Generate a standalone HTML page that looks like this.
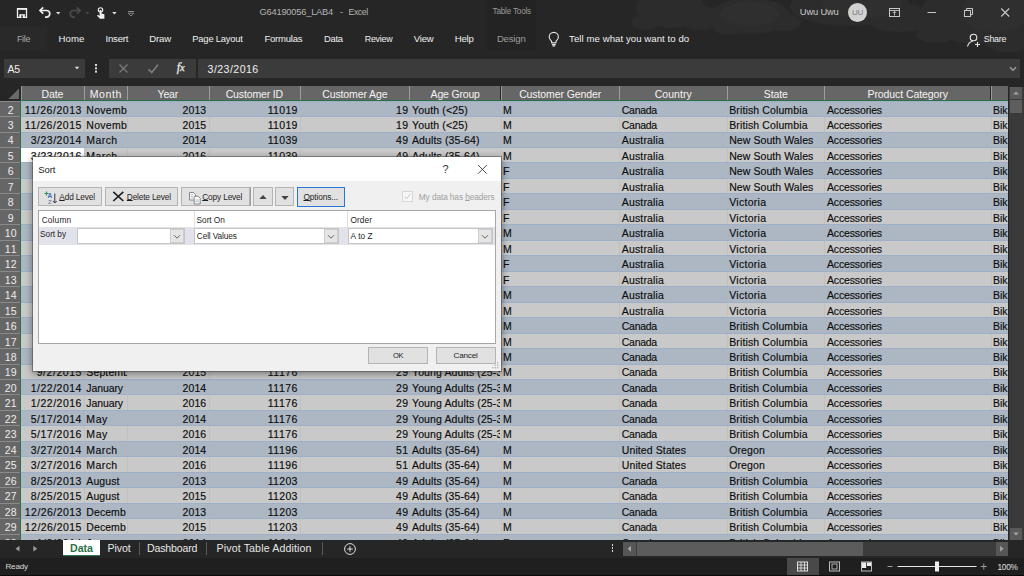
<!DOCTYPE html><html><head><meta charset="utf-8"><title>G64190056_LAB4 - Excel</title><style>
*{box-sizing:border-box;margin:0;padding:0}
html,body{width:1024px;height:576px;overflow:hidden;background:#262626}
body{position:relative;font-family:"Liberation Sans",sans-serif;font-size:9.5px;color:#fff}
.a{position:absolute;white-space:nowrap}
.ch{position:absolute;top:86px;height:15px;background:#666;border-left:1px solid #9c9c9c}
.rh{position:absolute;left:0;width:20.5px;background:#666;border-top:1px solid #8a8a8a}
.row{position:absolute;left:21px;width:987px;overflow:hidden;border-top:1px solid #9db0c8}
.c{position:absolute;top:0;height:100%;overflow:hidden}
.v{border-left:1px solid #c0c0c0}
.dlg{position:absolute;left:32.5px;top:157px;width:468px;height:213.5px;background:#f0f0f0;color:#222;box-shadow:0 0 0 1px rgba(70,70,70,.5),0 2px 7px 1px rgba(0,0,0,.4)}
.btn{position:absolute;background:#e1e1e1;border:1px solid #b4b4b4}
.cb{position:absolute;top:71px;height:16.5px;background:#fff;border:1px solid #c6c6c6}
.cb i{position:absolute;right:0;top:0;bottom:0;width:14px;background:#e5e5e5;border:1px solid #cdcdcd}
u{text-decoration:underline;text-underline-offset:.4px;text-decoration-thickness:.8px}
</style></head><body>
<div class="a" style="left:0;top:0;width:1024px;height:86px;background:#262626"></div>
<svg class="a" style="left:600px;top:0" width="424" height="58" viewBox="0 0 424 58">
<g fill="#2c2c2c">
<ellipse cx="70" cy="8" rx="34" ry="20"/><ellipse cx="46" cy="22" rx="14" ry="8"/><ellipse cx="100" cy="18" rx="22" ry="12"/>
<ellipse cx="150" cy="16" rx="40" ry="18"/><ellipse cx="128" cy="28" rx="14" ry="7"/><ellipse cx="185" cy="22" rx="16" ry="9"/>
<ellipse cx="250" cy="6" rx="60" ry="20"/><ellipse cx="300" cy="18" rx="34" ry="14"/>
<ellipse cx="380" cy="14" rx="60" ry="30"/><ellipse cx="408" cy="38" rx="26" ry="14"/><ellipse cx="336" cy="34" rx="20" ry="9"/>
</g>
<g fill="#2f2f2f"><ellipse cx="150" cy="14" rx="30" ry="12"/><ellipse cx="262" cy="4" rx="40" ry="14"/><ellipse cx="395" cy="12" rx="34" ry="20"/></g>
</svg>
<div class="a" style="left:0;top:27px;width:47px;height:24px;background:#292929"></div>
<div class="a" style="left:487px;top:0;width:49px;height:51px;background:#232323"></div>
<div class="a" style="left:492.50px;top:5.10px;line-height:14px;font-size:8.2px;color:#9a9a9a;letter-spacing:-0.213px;">Table Tools</div>
<div class="a" style="left:259.50px;top:5.10px;line-height:14px;font-size:9.3px;color:#b4b4b4;letter-spacing:-0.211px;">G64190056_LAB4</div>
<div class="a" style="left:340.00px;top:5.10px;line-height:14px;font-size:9.6px;color:#b4b4b4;letter-spacing:0.000px;">-</div>
<div class="a" style="left:348.60px;top:5.10px;line-height:14px;font-size:8.6px;color:#b4b4b4;letter-spacing:-0.383px;">Excel</div>
<div class="a" style="left:799.80px;top:5.10px;line-height:14px;font-size:9.4px;color:#c8c8c8;letter-spacing:-0.187px;">Uwu Uwu</div>
<div class="a" style="left:847.9px;top:2.8px;width:19.2px;height:19.2px;border-radius:50%;background:#d2d2d2;color:#7a7a7a;font-size:8px;line-height:19.4px;text-align:center;letter-spacing:-.2px">UU</div>
<div class="a" style="left:16.90px;top:31.90px;line-height:14px;font-size:8.9px;color:#a8a8a8;letter-spacing:-0.214px;">File</div>
<div class="a" style="left:58.60px;top:31.90px;line-height:14px;font-size:9.6px;color:#f0f0f0;letter-spacing:0.064px;">Home</div>
<div class="a" style="left:105.50px;top:31.90px;line-height:14px;font-size:9.6px;color:#f0f0f0;letter-spacing:-0.222px;">Insert</div>
<div class="a" style="left:149.20px;top:31.90px;line-height:14px;font-size:9.6px;color:#f0f0f0;letter-spacing:-0.101px;">Draw</div>
<div class="a" style="left:192.30px;top:31.90px;line-height:14px;font-size:9.4px;color:#f0f0f0;letter-spacing:-0.199px;">Page Layout</div>
<div class="a" style="left:264.40px;top:31.90px;line-height:14px;font-size:9.5px;color:#f0f0f0;letter-spacing:-0.213px;">Formulas</div>
<div class="a" style="left:323.90px;top:31.90px;line-height:14px;font-size:9.4px;color:#f0f0f0;letter-spacing:-0.219px;">Data</div>
<div class="a" style="left:364.70px;top:31.90px;line-height:14px;font-size:8.9px;color:#f0f0f0;letter-spacing:-0.216px;">Review</div>
<div class="a" style="left:413.75px;top:31.90px;line-height:14px;font-size:9.5px;color:#f0f0f0;letter-spacing:-0.190px;">View</div>
<div class="a" style="left:454.70px;top:31.90px;line-height:14px;font-size:9.6px;color:#f0f0f0;letter-spacing:-0.182px;">Help</div>
<div class="a" style="left:496.90px;top:31.90px;line-height:14px;font-size:9.6px;color:#9c9c9c;letter-spacing:-0.197px;">Design</div>
<div class="a" style="left:569.10px;top:31.90px;line-height:14px;font-size:9.6px;color:#f0f0f0;letter-spacing:0.063px;">Tell me what you want to do</div>
<div class="a" style="left:983.70px;top:31.90px;line-height:14px;font-size:8.9px;color:#f0f0f0;letter-spacing:-0.213px;">Share</div>
<svg class="a" style="left:0;top:0" width="160" height="26" viewBox="0 0 160 26" fill="none" stroke="#f0f0f0" stroke-width="1.2">
<path d="M17.500 8.700h9v8.700h-9z" stroke-width="1.300"/><path d="M17.500 9h9" stroke-width="1.600"/><rect x="19.300" y="14.200" width="5.600" height="3.300" fill="#f0f0f0" stroke="none"/><rect x="21.300" y="15.400" width="1.500" height="2.200" fill="#262626" stroke="none"/>
<path d="M40 10.500h6.500a3.300 3.300 0 0 1 0 6.600h-1.500" stroke-width="1.700"/><path d="M43.200 7.300l-3.200 3.200 3.200 3.200" stroke-width="1.700"/>
<path d="M56 12l2.200 2.400 2.200-2.400z" fill="#e0e0e0" stroke="none"/>
<g stroke="#4c4c4c"><path d="M80 10.500h-6.500a3.300 3.300 0 0 0 0 6.600h1.500" stroke-width="1.700"/><path d="M76.800 7.300l3.200 3.200-3.200 3.200" stroke-width="1.700"/></g>
<path d="M85.500 12l2 2.200 2-2.200z" fill="#4a4a4a" stroke="none"/>
<circle cx="100.500" cy="10" r="2.200" stroke-width="1.100"/><path d="M99.600 10v6l-1.600-1.200-1 1 3 3h4.400v-4.600l-3-.8v-3.400z" fill="#f0f0f0" stroke="none"/>
<path d="M112.200 12l2.200 2.400 2.200-2.400z" fill="#e0e0e0" stroke="none"/>
<path d="M128 11.500h6" stroke="#8a8a8a" stroke-width="1"/><path d="M128.200 13.200l2.800 2.800 2.800-2.800z" stroke="#8a8a8a" stroke-width=".9"/>
</svg>
<svg class="a" style="left:546px;top:30px" width="16" height="18" viewBox="0 0 16 18" fill="none" stroke="#e8e8e8" stroke-width="1.100">
<path d="M5.600 11.200c-1.600-1.200-2.400-2.600-2.400-4.200a4.600 4.600 0 0 1 9.200 0c0 1.600-.8 3-2.400 4.200v1.600h-4.400z"/><path d="M5.800 14.400h4M6.400 15.900h2.800"/></svg>
<svg class="a" style="left:964px;top:31px" width="18" height="18" viewBox="0 0 18 18" fill="none" stroke="#e8e8e8" stroke-width="1.100">
<circle cx="9.500" cy="6.500" r="3.300"/><path d="M3.500 15.500c.7-3 2.600-4.800 5.200-5.300"/><path d="M11 13.500h5M13.500 11v5"/></svg>
<svg class="a" style="left:880px;top:0" width="144" height="26" viewBox="0 0 144 26" fill="none" stroke="#c8c8c8" stroke-width="1">
<rect x="9.500" y="8.500" width="10" height="8"/><path d="M9.500 10.500h10M14.500 15.500v-4M12.800 13l1.700-1.700 1.700 1.700" stroke-width=".9"/>
<path d="M47.500 12.500h8.500"/>
<rect x="84.500" y="10.500" width="6" height="6"/><path d="M86.500 10.500v-2h6v6h-2"/>
<path d="M121.200 8.500l8 8M129.200 8.500l-8 8" stroke-width="1.100"/>
</svg>
<div class="a" style="left:4px;top:59px;width:81px;height:19px;background:#3b3b3b"></div>
<div class="a" style="left:7.50px;top:61.90px;line-height:14px;font-size:10.5px;color:#f0f0f0;letter-spacing:-0.144px;">A5</div>
<svg class="a" style="left:72px;top:64px" width="10" height="8" viewBox="0 0 10 8"><path d="M2.700 2.800l2.300 2.500 2.300-2.500z" fill="#e0e0e0"/></svg>
<div class="a" style="left:95px;top:63.500px;width:2px;height:2px;background:#ddd;box-shadow:0 3.300px 0 #ddd,0 6.600px 0 #ddd"></div>
<div class="a" style="left:109px;top:59px;width:87px;height:19px;background:#3b3b3b"></div>
<svg class="a" style="left:109px;top:59px" width="87" height="19" viewBox="0 0 87 19" fill="none" stroke="#7a7a7a" stroke-width="1.200">
<path d="M10.500 5.500l8 8M18.500 5.500l-8 8"/><path d="M39.500 10.300l3.200 3.200 6.300-7.700" stroke-width="1.800"/></svg>
<div class="a" style="left:176.700px;top:60.300px;font-family:'Liberation Serif',serif;font-style:italic;font-size:12.500px;line-height:14px;color:#f0f0f0;letter-spacing:-.3px;-webkit-text-stroke:.25px #f0f0f0">f<span style="font-size:10.500px">x</span></div>
<div class="a" style="left:198px;top:59px;width:822px;height:19px;background:#3b3b3b"></div>
<div class="a" style="left:207.60px;top:61.90px;line-height:14px;font-size:10.6px;color:#f0f0f0;letter-spacing:0.430px;">3/23/2016</div>
<svg class="a" style="left:1007px;top:64px" width="12" height="10" viewBox="0 0 12 10"><path d="M3 3.200l3 3 3-3" fill="none" stroke="#9a9a9a" stroke-width="1.500"/></svg>
<div class="a" style="left:0;top:86px;width:20.500px;height:15px;background:#262626"></div>
<svg class="a" style="left:8px;top:88px" width="12" height="12" viewBox="0 0 12 12"><path d="M11 0.500v10.500h-10.500z" fill="#6a6a6a"/></svg>
<div class="ch" style="left:20.5px;width:63.25px"></div>
<div class="a" style="left:41.46px;top:87.40px;line-height:14px;font-size:10.5px;color:#f4f4f4;letter-spacing:-0.083px;">Date</div>
<div class="ch" style="left:83.75px;width:43.00px"></div>
<div class="a" style="left:89.80px;top:87.40px;line-height:14px;font-size:10.5px;color:#f4f4f4;letter-spacing:0.577px;">Month</div>
<div class="ch" style="left:126.75px;width:81.75px"></div>
<div class="a" style="left:157.61px;top:87.40px;line-height:14px;font-size:10.5px;color:#f4f4f4;letter-spacing:-0.194px;">Year</div>
<div class="ch" style="left:208.5px;width:91.25px"></div>
<div class="a" style="left:225.69px;top:87.40px;line-height:14px;font-size:10.5px;color:#f4f4f4;letter-spacing:-0.146px;">Customer ID</div>
<div class="ch" style="left:299.75px;width:109.65px"></div>
<div class="a" style="left:322.26px;top:87.40px;line-height:14px;font-size:10.5px;color:#f4f4f4;letter-spacing:-0.119px;">Customer Age</div>
<div class="ch" style="left:409.4px;width:91.10px"></div>
<div class="a" style="left:430.60px;top:87.40px;line-height:14px;font-size:10.5px;color:#f4f4f4;letter-spacing:-0.187px;">Age Group</div>
<div class="ch" style="left:500.5px;width:118.70px"></div>
<div class="a" style="left:519.13px;top:87.40px;line-height:14px;font-size:10.5px;color:#f4f4f4;letter-spacing:-0.101px;">Customer Gender</div>
<div class="ch" style="left:619.2px;width:107.40px"></div>
<div class="a" style="left:654.72px;top:87.40px;line-height:14px;font-size:10.5px;color:#f4f4f4;letter-spacing:0.031px;">Country</div>
<div class="ch" style="left:726.6px;width:97.80px"></div>
<div class="a" style="left:763.82px;top:87.40px;line-height:14px;font-size:10.5px;color:#f4f4f4;letter-spacing:-0.137px;">State</div>
<div class="ch" style="left:824.4px;width:166.10px"></div>
<div class="a" style="left:867.51px;top:87.40px;line-height:14px;font-size:10.5px;color:#f4f4f4;letter-spacing:-0.082px;">Product Category</div>
<div class="ch" style="left:990.5px;width:17.00px"></div>
<div class="a" style="left:20.500px;top:100.6px;width:987px;height:439.40px;background:#c9c9c9"></div>
<div class="rh" style="top:101px;height:15px"></div>
<div class="a" style="left:7.63px;top:102.55px;line-height:14px;font-size:10.5px;color:#ececec;letter-spacing:0.000px;">2</div>
<div class="row" style="top:101px;height:15px;background:#acb7c3">
<div class="c" style="left:-0.50px;width:63.25px;"><span class="a" style="left:4.30px;top:0.55px;line-height:14px;font-size:10.5px;color:#0c0c0c;-webkit-text-stroke:.15px #0c0c0c;letter-spacing:0.542px">11/26/2013</span></div>
<div class="c" style="left:62.75px;width:43.00px;"><span class="a" style="left:2.6px;top:0.55px;line-height:14px;font-size:10.5px;color:#0c0c0c;-webkit-text-stroke:.15px #0c0c0c;letter-spacing:0.269px">Novemb</span></div>
<div class="c" style="left:105.75px;width:81.75px;"><span class="a" style="left:55.66px;top:0.55px;line-height:14px;font-size:10.5px;color:#0c0c0c;-webkit-text-stroke:.15px #0c0c0c;letter-spacing:0.145px">2013</span></div>
<div class="c" style="left:187.50px;width:91.25px;"><span class="a" style="left:59.21px;top:0.55px;line-height:14px;font-size:10.5px;color:#0c0c0c;-webkit-text-stroke:.15px #0c0c0c;letter-spacing:0.331px">11019</span></div>
<div class="c" style="left:278.75px;width:109.65px;"><span class="a" style="left:96.35px;top:0.55px;line-height:14px;font-size:10.5px;color:#0c0c0c;-webkit-text-stroke:.15px #0c0c0c;letter-spacing:0.218px">19</span></div>
<div class="c" style="left:388.40px;width:91.10px;"><span class="a" style="left:2.6px;top:0.55px;line-height:14px;font-size:10.5px;color:#0c0c0c;-webkit-text-stroke:.15px #0c0c0c;letter-spacing:0.145px">Youth (&lt;25)</span></div>
<div class="c" style="left:479.50px;width:118.70px;"><span class="a" style="left:2.6px;top:0.55px;line-height:14px;font-size:10.5px;color:#0c0c0c;-webkit-text-stroke:.15px #0c0c0c;letter-spacing:0.000px">M</span></div>
<div class="c" style="left:598.20px;width:107.40px;"><span class="a" style="left:2.6px;top:0.55px;line-height:14px;font-size:10.5px;color:#0c0c0c;-webkit-text-stroke:.15px #0c0c0c;letter-spacing:-0.270px">Canada</span></div>
<div class="c" style="left:705.60px;width:97.80px;"><span class="a" style="left:2.6px;top:0.55px;line-height:14px;font-size:10.5px;color:#0c0c0c;-webkit-text-stroke:.15px #0c0c0c;letter-spacing:0.124px">British Columbia</span></div>
<div class="c" style="left:803.40px;width:166.10px;"><span class="a" style="left:2.6px;top:0.55px;line-height:14px;font-size:10.5px;color:#0c0c0c;-webkit-text-stroke:.15px #0c0c0c;letter-spacing:-0.147px">Accessories</span></div>
<div class="c" style="left:969.50px;width:17.00px;"><span class="a" style="left:2.6px;top:0.55px;line-height:14px;font-size:10.5px;color:#0c0c0c;-webkit-text-stroke:.15px #0c0c0c;letter-spacing:-0.089px">Bik</span></div>
</div>
<div class="rh" style="top:116px;height:16px"></div>
<div class="a" style="left:7.63px;top:118.02px;line-height:14px;font-size:10.5px;color:#ececec;letter-spacing:0.000px;">3</div>
<div class="row" style="top:116px;height:16px;background:#c9c9c9">
<div class="c" style="left:-0.50px;width:63.25px;"><span class="a" style="left:4.30px;top:1.02px;line-height:14px;font-size:10.5px;color:#0c0c0c;-webkit-text-stroke:.15px #0c0c0c;letter-spacing:0.542px">11/26/2015</span></div>
<div class="c v" style="left:62.75px;width:43.00px;"><span class="a" style="left:1.6px;top:1.02px;line-height:14px;font-size:10.5px;color:#0c0c0c;-webkit-text-stroke:.15px #0c0c0c;letter-spacing:0.269px">Novemb</span></div>
<div class="c v" style="left:105.75px;width:81.75px;"><span class="a" style="left:54.66px;top:1.02px;line-height:14px;font-size:10.5px;color:#0c0c0c;-webkit-text-stroke:.15px #0c0c0c;letter-spacing:0.145px">2015</span></div>
<div class="c v" style="left:187.50px;width:91.25px;"><span class="a" style="left:58.21px;top:1.02px;line-height:14px;font-size:10.5px;color:#0c0c0c;-webkit-text-stroke:.15px #0c0c0c;letter-spacing:0.331px">11019</span></div>
<div class="c v" style="left:278.75px;width:109.65px;"><span class="a" style="left:95.35px;top:1.02px;line-height:14px;font-size:10.5px;color:#0c0c0c;-webkit-text-stroke:.15px #0c0c0c;letter-spacing:0.218px">19</span></div>
<div class="c v" style="left:388.40px;width:91.10px;"><span class="a" style="left:1.6px;top:1.02px;line-height:14px;font-size:10.5px;color:#0c0c0c;-webkit-text-stroke:.15px #0c0c0c;letter-spacing:0.145px">Youth (&lt;25)</span></div>
<div class="c v" style="left:479.50px;width:118.70px;"><span class="a" style="left:1.6px;top:1.02px;line-height:14px;font-size:10.5px;color:#0c0c0c;-webkit-text-stroke:.15px #0c0c0c;letter-spacing:0.000px">M</span></div>
<div class="c v" style="left:598.20px;width:107.40px;"><span class="a" style="left:1.6px;top:1.02px;line-height:14px;font-size:10.5px;color:#0c0c0c;-webkit-text-stroke:.15px #0c0c0c;letter-spacing:-0.270px">Canada</span></div>
<div class="c v" style="left:705.60px;width:97.80px;"><span class="a" style="left:1.6px;top:1.02px;line-height:14px;font-size:10.5px;color:#0c0c0c;-webkit-text-stroke:.15px #0c0c0c;letter-spacing:0.124px">British Columbia</span></div>
<div class="c v" style="left:803.40px;width:166.10px;"><span class="a" style="left:1.6px;top:1.02px;line-height:14px;font-size:10.5px;color:#0c0c0c;-webkit-text-stroke:.15px #0c0c0c;letter-spacing:-0.147px">Accessories</span></div>
<div class="c v" style="left:969.50px;width:17.00px;"><span class="a" style="left:1.6px;top:1.02px;line-height:14px;font-size:10.5px;color:#0c0c0c;-webkit-text-stroke:.15px #0c0c0c;letter-spacing:-0.089px">Bik</span></div>
</div>
<div class="rh" style="top:132px;height:15px"></div>
<div class="a" style="left:7.63px;top:133.48px;line-height:14px;font-size:10.5px;color:#ececec;letter-spacing:0.000px;">4</div>
<div class="row" style="top:132px;height:15px;background:#acb7c3">
<div class="c" style="left:-0.50px;width:63.25px;"><span class="a" style="left:10.25px;top:0.48px;line-height:14px;font-size:10.5px;color:#0c0c0c;-webkit-text-stroke:.15px #0c0c0c;letter-spacing:0.498px">3/23/2014</span></div>
<div class="c" style="left:62.75px;width:43.00px;"><span class="a" style="left:2.6px;top:0.48px;line-height:14px;font-size:10.5px;color:#0c0c0c;-webkit-text-stroke:.15px #0c0c0c;letter-spacing:0.424px">March</span></div>
<div class="c" style="left:105.75px;width:81.75px;"><span class="a" style="left:55.66px;top:0.48px;line-height:14px;font-size:10.5px;color:#0c0c0c;-webkit-text-stroke:.15px #0c0c0c;letter-spacing:0.145px">2014</span></div>
<div class="c" style="left:187.50px;width:91.25px;"><span class="a" style="left:59.21px;top:0.48px;line-height:14px;font-size:10.5px;color:#0c0c0c;-webkit-text-stroke:.15px #0c0c0c;letter-spacing:0.331px">11039</span></div>
<div class="c" style="left:278.75px;width:109.65px;"><span class="a" style="left:96.35px;top:0.48px;line-height:14px;font-size:10.5px;color:#0c0c0c;-webkit-text-stroke:.15px #0c0c0c;letter-spacing:0.218px">49</span></div>
<div class="c" style="left:388.40px;width:91.10px;"><span class="a" style="left:2.6px;top:0.48px;line-height:14px;font-size:10.5px;color:#0c0c0c;-webkit-text-stroke:.15px #0c0c0c;letter-spacing:0.116px">Adults (35-64)</span></div>
<div class="c" style="left:479.50px;width:118.70px;"><span class="a" style="left:2.6px;top:0.48px;line-height:14px;font-size:10.5px;color:#0c0c0c;-webkit-text-stroke:.15px #0c0c0c;letter-spacing:0.000px">M</span></div>
<div class="c" style="left:598.20px;width:107.40px;"><span class="a" style="left:2.6px;top:0.48px;line-height:14px;font-size:10.5px;color:#0c0c0c;-webkit-text-stroke:.15px #0c0c0c;letter-spacing:0.166px">Australia</span></div>
<div class="c" style="left:705.60px;width:97.80px;"><span class="a" style="left:2.6px;top:0.48px;line-height:14px;font-size:10.5px;color:#0c0c0c;-webkit-text-stroke:.15px #0c0c0c;letter-spacing:0.075px">New South Wales</span></div>
<div class="c" style="left:803.40px;width:166.10px;"><span class="a" style="left:2.6px;top:0.48px;line-height:14px;font-size:10.5px;color:#0c0c0c;-webkit-text-stroke:.15px #0c0c0c;letter-spacing:-0.147px">Accessories</span></div>
<div class="c" style="left:969.50px;width:17.00px;"><span class="a" style="left:2.6px;top:0.48px;line-height:14px;font-size:10.5px;color:#0c0c0c;-webkit-text-stroke:.15px #0c0c0c;letter-spacing:-0.089px">Bik</span></div>
</div>
<div class="rh" style="top:147px;height:15px"></div>
<div class="a" style="left:7.63px;top:148.95px;line-height:14px;font-size:10.5px;color:#ececec;letter-spacing:0.000px;">5</div>
<div class="row" style="top:147px;height:15px;background:#c9c9c9">
<div class="c" style="left:-0.50px;width:63.25px;background:#fff;"><span class="a" style="left:10.25px;top:0.95px;line-height:14px;font-size:10.5px;color:#0c0c0c;-webkit-text-stroke:.15px #0c0c0c;letter-spacing:0.498px">3/23/2016</span></div>
<div class="c v" style="left:62.75px;width:43.00px;"><span class="a" style="left:1.6px;top:0.95px;line-height:14px;font-size:10.5px;color:#0c0c0c;-webkit-text-stroke:.15px #0c0c0c;letter-spacing:0.424px">March</span></div>
<div class="c v" style="left:105.75px;width:81.75px;"><span class="a" style="left:54.66px;top:0.95px;line-height:14px;font-size:10.5px;color:#0c0c0c;-webkit-text-stroke:.15px #0c0c0c;letter-spacing:0.145px">2016</span></div>
<div class="c v" style="left:187.50px;width:91.25px;"><span class="a" style="left:58.21px;top:0.95px;line-height:14px;font-size:10.5px;color:#0c0c0c;-webkit-text-stroke:.15px #0c0c0c;letter-spacing:0.331px">11039</span></div>
<div class="c v" style="left:278.75px;width:109.65px;"><span class="a" style="left:95.35px;top:0.95px;line-height:14px;font-size:10.5px;color:#0c0c0c;-webkit-text-stroke:.15px #0c0c0c;letter-spacing:0.218px">49</span></div>
<div class="c v" style="left:388.40px;width:91.10px;"><span class="a" style="left:1.6px;top:0.95px;line-height:14px;font-size:10.5px;color:#0c0c0c;-webkit-text-stroke:.15px #0c0c0c;letter-spacing:0.116px">Adults (35-64)</span></div>
<div class="c v" style="left:479.50px;width:118.70px;"><span class="a" style="left:1.6px;top:0.95px;line-height:14px;font-size:10.5px;color:#0c0c0c;-webkit-text-stroke:.15px #0c0c0c;letter-spacing:0.000px">M</span></div>
<div class="c v" style="left:598.20px;width:107.40px;"><span class="a" style="left:1.6px;top:0.95px;line-height:14px;font-size:10.5px;color:#0c0c0c;-webkit-text-stroke:.15px #0c0c0c;letter-spacing:0.166px">Australia</span></div>
<div class="c v" style="left:705.60px;width:97.80px;"><span class="a" style="left:1.6px;top:0.95px;line-height:14px;font-size:10.5px;color:#0c0c0c;-webkit-text-stroke:.15px #0c0c0c;letter-spacing:0.075px">New South Wales</span></div>
<div class="c v" style="left:803.40px;width:166.10px;"><span class="a" style="left:1.6px;top:0.95px;line-height:14px;font-size:10.5px;color:#0c0c0c;-webkit-text-stroke:.15px #0c0c0c;letter-spacing:-0.147px">Accessories</span></div>
<div class="c v" style="left:969.50px;width:17.00px;"><span class="a" style="left:1.6px;top:0.95px;line-height:14px;font-size:10.5px;color:#0c0c0c;-webkit-text-stroke:.15px #0c0c0c;letter-spacing:-0.089px">Bik</span></div>
</div>
<div class="rh" style="top:162px;height:16px"></div>
<div class="a" style="left:7.63px;top:164.42px;line-height:14px;font-size:10.5px;color:#ececec;letter-spacing:0.000px;">6</div>
<div class="row" style="top:162px;height:16px;background:#acb7c3">
<div class="c" style="left:-0.50px;width:63.25px;"></div>
<div class="c" style="left:62.75px;width:43.00px;"></div>
<div class="c" style="left:105.75px;width:81.75px;"></div>
<div class="c" style="left:187.50px;width:91.25px;"></div>
<div class="c" style="left:278.75px;width:109.65px;"></div>
<div class="c" style="left:388.40px;width:91.10px;"></div>
<div class="c" style="left:479.50px;width:118.70px;"><span class="a" style="left:2.6px;top:1.42px;line-height:14px;font-size:10.5px;color:#0c0c0c;-webkit-text-stroke:.15px #0c0c0c;letter-spacing:0.000px">F</span></div>
<div class="c" style="left:598.20px;width:107.40px;"><span class="a" style="left:2.6px;top:1.42px;line-height:14px;font-size:10.5px;color:#0c0c0c;-webkit-text-stroke:.15px #0c0c0c;letter-spacing:0.166px">Australia</span></div>
<div class="c" style="left:705.60px;width:97.80px;"><span class="a" style="left:2.6px;top:1.42px;line-height:14px;font-size:10.5px;color:#0c0c0c;-webkit-text-stroke:.15px #0c0c0c;letter-spacing:0.075px">New South Wales</span></div>
<div class="c" style="left:803.40px;width:166.10px;"><span class="a" style="left:2.6px;top:1.42px;line-height:14px;font-size:10.5px;color:#0c0c0c;-webkit-text-stroke:.15px #0c0c0c;letter-spacing:-0.147px">Accessories</span></div>
<div class="c" style="left:969.50px;width:17.00px;"><span class="a" style="left:2.6px;top:1.42px;line-height:14px;font-size:10.5px;color:#0c0c0c;-webkit-text-stroke:.15px #0c0c0c;letter-spacing:-0.089px">Bik</span></div>
</div>
<div class="rh" style="top:178px;height:15px"></div>
<div class="a" style="left:7.63px;top:179.88px;line-height:14px;font-size:10.5px;color:#ececec;letter-spacing:0.000px;">7</div>
<div class="row" style="top:178px;height:15px;background:#c9c9c9">
<div class="c" style="left:-0.50px;width:63.25px;"></div>
<div class="c v" style="left:62.75px;width:43.00px;"></div>
<div class="c v" style="left:105.75px;width:81.75px;"></div>
<div class="c v" style="left:187.50px;width:91.25px;"></div>
<div class="c v" style="left:278.75px;width:109.65px;"></div>
<div class="c v" style="left:388.40px;width:91.10px;"></div>
<div class="c v" style="left:479.50px;width:118.70px;"><span class="a" style="left:1.6px;top:0.88px;line-height:14px;font-size:10.5px;color:#0c0c0c;-webkit-text-stroke:.15px #0c0c0c;letter-spacing:0.000px">F</span></div>
<div class="c v" style="left:598.20px;width:107.40px;"><span class="a" style="left:1.6px;top:0.88px;line-height:14px;font-size:10.5px;color:#0c0c0c;-webkit-text-stroke:.15px #0c0c0c;letter-spacing:0.166px">Australia</span></div>
<div class="c v" style="left:705.60px;width:97.80px;"><span class="a" style="left:1.6px;top:0.88px;line-height:14px;font-size:10.5px;color:#0c0c0c;-webkit-text-stroke:.15px #0c0c0c;letter-spacing:0.075px">New South Wales</span></div>
<div class="c v" style="left:803.40px;width:166.10px;"><span class="a" style="left:1.6px;top:0.88px;line-height:14px;font-size:10.5px;color:#0c0c0c;-webkit-text-stroke:.15px #0c0c0c;letter-spacing:-0.147px">Accessories</span></div>
<div class="c v" style="left:969.50px;width:17.00px;"><span class="a" style="left:1.6px;top:0.88px;line-height:14px;font-size:10.5px;color:#0c0c0c;-webkit-text-stroke:.15px #0c0c0c;letter-spacing:-0.089px">Bik</span></div>
</div>
<div class="rh" style="top:193px;height:16px"></div>
<div class="a" style="left:7.63px;top:195.35px;line-height:14px;font-size:10.5px;color:#ececec;letter-spacing:0.000px;">8</div>
<div class="row" style="top:193px;height:16px;background:#acb7c3">
<div class="c" style="left:-0.50px;width:63.25px;"></div>
<div class="c" style="left:62.75px;width:43.00px;"></div>
<div class="c" style="left:105.75px;width:81.75px;"></div>
<div class="c" style="left:187.50px;width:91.25px;"></div>
<div class="c" style="left:278.75px;width:109.65px;"></div>
<div class="c" style="left:388.40px;width:91.10px;"></div>
<div class="c" style="left:479.50px;width:118.70px;"><span class="a" style="left:2.6px;top:1.35px;line-height:14px;font-size:10.5px;color:#0c0c0c;-webkit-text-stroke:.15px #0c0c0c;letter-spacing:0.000px">F</span></div>
<div class="c" style="left:598.20px;width:107.40px;"><span class="a" style="left:2.6px;top:1.35px;line-height:14px;font-size:10.5px;color:#0c0c0c;-webkit-text-stroke:.15px #0c0c0c;letter-spacing:0.166px">Australia</span></div>
<div class="c" style="left:705.60px;width:97.80px;"><span class="a" style="left:2.6px;top:1.35px;line-height:14px;font-size:10.5px;color:#0c0c0c;-webkit-text-stroke:.15px #0c0c0c;letter-spacing:0.285px">Victoria</span></div>
<div class="c" style="left:803.40px;width:166.10px;"><span class="a" style="left:2.6px;top:1.35px;line-height:14px;font-size:10.5px;color:#0c0c0c;-webkit-text-stroke:.15px #0c0c0c;letter-spacing:-0.147px">Accessories</span></div>
<div class="c" style="left:969.50px;width:17.00px;"><span class="a" style="left:2.6px;top:1.35px;line-height:14px;font-size:10.5px;color:#0c0c0c;-webkit-text-stroke:.15px #0c0c0c;letter-spacing:-0.089px">Bik</span></div>
</div>
<div class="rh" style="top:209px;height:15px"></div>
<div class="a" style="left:7.63px;top:210.82px;line-height:14px;font-size:10.5px;color:#ececec;letter-spacing:0.000px;">9</div>
<div class="row" style="top:209px;height:15px;background:#c9c9c9">
<div class="c" style="left:-0.50px;width:63.25px;"></div>
<div class="c v" style="left:62.75px;width:43.00px;"></div>
<div class="c v" style="left:105.75px;width:81.75px;"></div>
<div class="c v" style="left:187.50px;width:91.25px;"></div>
<div class="c v" style="left:278.75px;width:109.65px;"></div>
<div class="c v" style="left:388.40px;width:91.10px;"></div>
<div class="c v" style="left:479.50px;width:118.70px;"><span class="a" style="left:1.6px;top:0.82px;line-height:14px;font-size:10.5px;color:#0c0c0c;-webkit-text-stroke:.15px #0c0c0c;letter-spacing:0.000px">F</span></div>
<div class="c v" style="left:598.20px;width:107.40px;"><span class="a" style="left:1.6px;top:0.82px;line-height:14px;font-size:10.5px;color:#0c0c0c;-webkit-text-stroke:.15px #0c0c0c;letter-spacing:0.166px">Australia</span></div>
<div class="c v" style="left:705.60px;width:97.80px;"><span class="a" style="left:1.6px;top:0.82px;line-height:14px;font-size:10.5px;color:#0c0c0c;-webkit-text-stroke:.15px #0c0c0c;letter-spacing:0.285px">Victoria</span></div>
<div class="c v" style="left:803.40px;width:166.10px;"><span class="a" style="left:1.6px;top:0.82px;line-height:14px;font-size:10.5px;color:#0c0c0c;-webkit-text-stroke:.15px #0c0c0c;letter-spacing:-0.147px">Accessories</span></div>
<div class="c v" style="left:969.50px;width:17.00px;"><span class="a" style="left:1.6px;top:0.82px;line-height:14px;font-size:10.5px;color:#0c0c0c;-webkit-text-stroke:.15px #0c0c0c;letter-spacing:-0.089px">Bik</span></div>
</div>
<div class="rh" style="top:224px;height:16px"></div>
<div class="a" style="left:4.65px;top:226.28px;line-height:14px;font-size:10.5px;color:#ececec;letter-spacing:0.218px;">10</div>
<div class="row" style="top:224px;height:16px;background:#acb7c3">
<div class="c" style="left:-0.50px;width:63.25px;"></div>
<div class="c" style="left:62.75px;width:43.00px;"></div>
<div class="c" style="left:105.75px;width:81.75px;"></div>
<div class="c" style="left:187.50px;width:91.25px;"></div>
<div class="c" style="left:278.75px;width:109.65px;"></div>
<div class="c" style="left:388.40px;width:91.10px;"></div>
<div class="c" style="left:479.50px;width:118.70px;"><span class="a" style="left:2.6px;top:1.28px;line-height:14px;font-size:10.5px;color:#0c0c0c;-webkit-text-stroke:.15px #0c0c0c;letter-spacing:0.000px">M</span></div>
<div class="c" style="left:598.20px;width:107.40px;"><span class="a" style="left:2.6px;top:1.28px;line-height:14px;font-size:10.5px;color:#0c0c0c;-webkit-text-stroke:.15px #0c0c0c;letter-spacing:0.166px">Australia</span></div>
<div class="c" style="left:705.60px;width:97.80px;"><span class="a" style="left:2.6px;top:1.28px;line-height:14px;font-size:10.5px;color:#0c0c0c;-webkit-text-stroke:.15px #0c0c0c;letter-spacing:0.285px">Victoria</span></div>
<div class="c" style="left:803.40px;width:166.10px;"><span class="a" style="left:2.6px;top:1.28px;line-height:14px;font-size:10.5px;color:#0c0c0c;-webkit-text-stroke:.15px #0c0c0c;letter-spacing:-0.147px">Accessories</span></div>
<div class="c" style="left:969.50px;width:17.00px;"><span class="a" style="left:2.6px;top:1.28px;line-height:14px;font-size:10.5px;color:#0c0c0c;-webkit-text-stroke:.15px #0c0c0c;letter-spacing:-0.089px">Bik</span></div>
</div>
<div class="rh" style="top:240px;height:15px"></div>
<div class="a" style="left:4.65px;top:241.75px;line-height:14px;font-size:10.5px;color:#ececec;letter-spacing:0.997px;">11</div>
<div class="row" style="top:240px;height:15px;background:#c9c9c9">
<div class="c" style="left:-0.50px;width:63.25px;"></div>
<div class="c v" style="left:62.75px;width:43.00px;"></div>
<div class="c v" style="left:105.75px;width:81.75px;"></div>
<div class="c v" style="left:187.50px;width:91.25px;"></div>
<div class="c v" style="left:278.75px;width:109.65px;"></div>
<div class="c v" style="left:388.40px;width:91.10px;"></div>
<div class="c v" style="left:479.50px;width:118.70px;"><span class="a" style="left:1.6px;top:0.75px;line-height:14px;font-size:10.5px;color:#0c0c0c;-webkit-text-stroke:.15px #0c0c0c;letter-spacing:0.000px">M</span></div>
<div class="c v" style="left:598.20px;width:107.40px;"><span class="a" style="left:1.6px;top:0.75px;line-height:14px;font-size:10.5px;color:#0c0c0c;-webkit-text-stroke:.15px #0c0c0c;letter-spacing:0.166px">Australia</span></div>
<div class="c v" style="left:705.60px;width:97.80px;"><span class="a" style="left:1.6px;top:0.75px;line-height:14px;font-size:10.5px;color:#0c0c0c;-webkit-text-stroke:.15px #0c0c0c;letter-spacing:0.285px">Victoria</span></div>
<div class="c v" style="left:803.40px;width:166.10px;"><span class="a" style="left:1.6px;top:0.75px;line-height:14px;font-size:10.5px;color:#0c0c0c;-webkit-text-stroke:.15px #0c0c0c;letter-spacing:-0.147px">Accessories</span></div>
<div class="c v" style="left:969.50px;width:17.00px;"><span class="a" style="left:1.6px;top:0.75px;line-height:14px;font-size:10.5px;color:#0c0c0c;-webkit-text-stroke:.15px #0c0c0c;letter-spacing:-0.089px">Bik</span></div>
</div>
<div class="rh" style="top:255px;height:16px"></div>
<div class="a" style="left:4.65px;top:257.22px;line-height:14px;font-size:10.5px;color:#ececec;letter-spacing:0.218px;">12</div>
<div class="row" style="top:255px;height:16px;background:#acb7c3">
<div class="c" style="left:-0.50px;width:63.25px;"></div>
<div class="c" style="left:62.75px;width:43.00px;"></div>
<div class="c" style="left:105.75px;width:81.75px;"></div>
<div class="c" style="left:187.50px;width:91.25px;"></div>
<div class="c" style="left:278.75px;width:109.65px;"></div>
<div class="c" style="left:388.40px;width:91.10px;"></div>
<div class="c" style="left:479.50px;width:118.70px;"><span class="a" style="left:2.6px;top:1.22px;line-height:14px;font-size:10.5px;color:#0c0c0c;-webkit-text-stroke:.15px #0c0c0c;letter-spacing:0.000px">F</span></div>
<div class="c" style="left:598.20px;width:107.40px;"><span class="a" style="left:2.6px;top:1.22px;line-height:14px;font-size:10.5px;color:#0c0c0c;-webkit-text-stroke:.15px #0c0c0c;letter-spacing:0.166px">Australia</span></div>
<div class="c" style="left:705.60px;width:97.80px;"><span class="a" style="left:2.6px;top:1.22px;line-height:14px;font-size:10.5px;color:#0c0c0c;-webkit-text-stroke:.15px #0c0c0c;letter-spacing:0.285px">Victoria</span></div>
<div class="c" style="left:803.40px;width:166.10px;"><span class="a" style="left:2.6px;top:1.22px;line-height:14px;font-size:10.5px;color:#0c0c0c;-webkit-text-stroke:.15px #0c0c0c;letter-spacing:-0.147px">Accessories</span></div>
<div class="c" style="left:969.50px;width:17.00px;"><span class="a" style="left:2.6px;top:1.22px;line-height:14px;font-size:10.5px;color:#0c0c0c;-webkit-text-stroke:.15px #0c0c0c;letter-spacing:-0.089px">Bik</span></div>
</div>
<div class="rh" style="top:271px;height:15px"></div>
<div class="a" style="left:4.65px;top:272.68px;line-height:14px;font-size:10.5px;color:#ececec;letter-spacing:0.218px;">13</div>
<div class="row" style="top:271px;height:15px;background:#c9c9c9">
<div class="c" style="left:-0.50px;width:63.25px;"></div>
<div class="c v" style="left:62.75px;width:43.00px;"></div>
<div class="c v" style="left:105.75px;width:81.75px;"></div>
<div class="c v" style="left:187.50px;width:91.25px;"></div>
<div class="c v" style="left:278.75px;width:109.65px;"></div>
<div class="c v" style="left:388.40px;width:91.10px;"></div>
<div class="c v" style="left:479.50px;width:118.70px;"><span class="a" style="left:1.6px;top:0.68px;line-height:14px;font-size:10.5px;color:#0c0c0c;-webkit-text-stroke:.15px #0c0c0c;letter-spacing:0.000px">F</span></div>
<div class="c v" style="left:598.20px;width:107.40px;"><span class="a" style="left:1.6px;top:0.68px;line-height:14px;font-size:10.5px;color:#0c0c0c;-webkit-text-stroke:.15px #0c0c0c;letter-spacing:0.166px">Australia</span></div>
<div class="c v" style="left:705.60px;width:97.80px;"><span class="a" style="left:1.6px;top:0.68px;line-height:14px;font-size:10.5px;color:#0c0c0c;-webkit-text-stroke:.15px #0c0c0c;letter-spacing:0.285px">Victoria</span></div>
<div class="c v" style="left:803.40px;width:166.10px;"><span class="a" style="left:1.6px;top:0.68px;line-height:14px;font-size:10.5px;color:#0c0c0c;-webkit-text-stroke:.15px #0c0c0c;letter-spacing:-0.147px">Accessories</span></div>
<div class="c v" style="left:969.50px;width:17.00px;"><span class="a" style="left:1.6px;top:0.68px;line-height:14px;font-size:10.5px;color:#0c0c0c;-webkit-text-stroke:.15px #0c0c0c;letter-spacing:-0.089px">Bik</span></div>
</div>
<div class="rh" style="top:286px;height:16px"></div>
<div class="a" style="left:4.65px;top:288.15px;line-height:14px;font-size:10.5px;color:#ececec;letter-spacing:0.218px;">14</div>
<div class="row" style="top:286px;height:16px;background:#acb7c3">
<div class="c" style="left:-0.50px;width:63.25px;"></div>
<div class="c" style="left:62.75px;width:43.00px;"></div>
<div class="c" style="left:105.75px;width:81.75px;"></div>
<div class="c" style="left:187.50px;width:91.25px;"></div>
<div class="c" style="left:278.75px;width:109.65px;"></div>
<div class="c" style="left:388.40px;width:91.10px;"></div>
<div class="c" style="left:479.50px;width:118.70px;"><span class="a" style="left:2.6px;top:1.15px;line-height:14px;font-size:10.5px;color:#0c0c0c;-webkit-text-stroke:.15px #0c0c0c;letter-spacing:0.000px">M</span></div>
<div class="c" style="left:598.20px;width:107.40px;"><span class="a" style="left:2.6px;top:1.15px;line-height:14px;font-size:10.5px;color:#0c0c0c;-webkit-text-stroke:.15px #0c0c0c;letter-spacing:0.166px">Australia</span></div>
<div class="c" style="left:705.60px;width:97.80px;"><span class="a" style="left:2.6px;top:1.15px;line-height:14px;font-size:10.5px;color:#0c0c0c;-webkit-text-stroke:.15px #0c0c0c;letter-spacing:0.285px">Victoria</span></div>
<div class="c" style="left:803.40px;width:166.10px;"><span class="a" style="left:2.6px;top:1.15px;line-height:14px;font-size:10.5px;color:#0c0c0c;-webkit-text-stroke:.15px #0c0c0c;letter-spacing:-0.147px">Accessories</span></div>
<div class="c" style="left:969.50px;width:17.00px;"><span class="a" style="left:2.6px;top:1.15px;line-height:14px;font-size:10.5px;color:#0c0c0c;-webkit-text-stroke:.15px #0c0c0c;letter-spacing:-0.089px">Bik</span></div>
</div>
<div class="rh" style="top:302px;height:15px"></div>
<div class="a" style="left:4.65px;top:303.62px;line-height:14px;font-size:10.5px;color:#ececec;letter-spacing:0.218px;">15</div>
<div class="row" style="top:302px;height:15px;background:#c9c9c9">
<div class="c" style="left:-0.50px;width:63.25px;"></div>
<div class="c v" style="left:62.75px;width:43.00px;"></div>
<div class="c v" style="left:105.75px;width:81.75px;"></div>
<div class="c v" style="left:187.50px;width:91.25px;"></div>
<div class="c v" style="left:278.75px;width:109.65px;"></div>
<div class="c v" style="left:388.40px;width:91.10px;"></div>
<div class="c v" style="left:479.50px;width:118.70px;"><span class="a" style="left:1.6px;top:0.62px;line-height:14px;font-size:10.5px;color:#0c0c0c;-webkit-text-stroke:.15px #0c0c0c;letter-spacing:0.000px">M</span></div>
<div class="c v" style="left:598.20px;width:107.40px;"><span class="a" style="left:1.6px;top:0.62px;line-height:14px;font-size:10.5px;color:#0c0c0c;-webkit-text-stroke:.15px #0c0c0c;letter-spacing:0.166px">Australia</span></div>
<div class="c v" style="left:705.60px;width:97.80px;"><span class="a" style="left:1.6px;top:0.62px;line-height:14px;font-size:10.5px;color:#0c0c0c;-webkit-text-stroke:.15px #0c0c0c;letter-spacing:0.285px">Victoria</span></div>
<div class="c v" style="left:803.40px;width:166.10px;"><span class="a" style="left:1.6px;top:0.62px;line-height:14px;font-size:10.5px;color:#0c0c0c;-webkit-text-stroke:.15px #0c0c0c;letter-spacing:-0.147px">Accessories</span></div>
<div class="c v" style="left:969.50px;width:17.00px;"><span class="a" style="left:1.6px;top:0.62px;line-height:14px;font-size:10.5px;color:#0c0c0c;-webkit-text-stroke:.15px #0c0c0c;letter-spacing:-0.089px">Bik</span></div>
</div>
<div class="rh" style="top:317px;height:16px"></div>
<div class="a" style="left:4.65px;top:319.08px;line-height:14px;font-size:10.5px;color:#ececec;letter-spacing:0.218px;">16</div>
<div class="row" style="top:317px;height:16px;background:#acb7c3">
<div class="c" style="left:-0.50px;width:63.25px;"></div>
<div class="c" style="left:62.75px;width:43.00px;"></div>
<div class="c" style="left:105.75px;width:81.75px;"></div>
<div class="c" style="left:187.50px;width:91.25px;"></div>
<div class="c" style="left:278.75px;width:109.65px;"></div>
<div class="c" style="left:388.40px;width:91.10px;"></div>
<div class="c" style="left:479.50px;width:118.70px;"><span class="a" style="left:2.6px;top:1.08px;line-height:14px;font-size:10.5px;color:#0c0c0c;-webkit-text-stroke:.15px #0c0c0c;letter-spacing:0.000px">M</span></div>
<div class="c" style="left:598.20px;width:107.40px;"><span class="a" style="left:2.6px;top:1.08px;line-height:14px;font-size:10.5px;color:#0c0c0c;-webkit-text-stroke:.15px #0c0c0c;letter-spacing:-0.270px">Canada</span></div>
<div class="c" style="left:705.60px;width:97.80px;"><span class="a" style="left:2.6px;top:1.08px;line-height:14px;font-size:10.5px;color:#0c0c0c;-webkit-text-stroke:.15px #0c0c0c;letter-spacing:0.124px">British Columbia</span></div>
<div class="c" style="left:803.40px;width:166.10px;"><span class="a" style="left:2.6px;top:1.08px;line-height:14px;font-size:10.5px;color:#0c0c0c;-webkit-text-stroke:.15px #0c0c0c;letter-spacing:-0.147px">Accessories</span></div>
<div class="c" style="left:969.50px;width:17.00px;"><span class="a" style="left:2.6px;top:1.08px;line-height:14px;font-size:10.5px;color:#0c0c0c;-webkit-text-stroke:.15px #0c0c0c;letter-spacing:-0.089px">Bik</span></div>
</div>
<div class="rh" style="top:333px;height:15px"></div>
<div class="a" style="left:4.65px;top:334.55px;line-height:14px;font-size:10.5px;color:#ececec;letter-spacing:0.218px;">17</div>
<div class="row" style="top:333px;height:15px;background:#c9c9c9">
<div class="c" style="left:-0.50px;width:63.25px;"></div>
<div class="c v" style="left:62.75px;width:43.00px;"></div>
<div class="c v" style="left:105.75px;width:81.75px;"></div>
<div class="c v" style="left:187.50px;width:91.25px;"></div>
<div class="c v" style="left:278.75px;width:109.65px;"></div>
<div class="c v" style="left:388.40px;width:91.10px;"></div>
<div class="c v" style="left:479.50px;width:118.70px;"><span class="a" style="left:1.6px;top:0.55px;line-height:14px;font-size:10.5px;color:#0c0c0c;-webkit-text-stroke:.15px #0c0c0c;letter-spacing:0.000px">M</span></div>
<div class="c v" style="left:598.20px;width:107.40px;"><span class="a" style="left:1.6px;top:0.55px;line-height:14px;font-size:10.5px;color:#0c0c0c;-webkit-text-stroke:.15px #0c0c0c;letter-spacing:-0.270px">Canada</span></div>
<div class="c v" style="left:705.60px;width:97.80px;"><span class="a" style="left:1.6px;top:0.55px;line-height:14px;font-size:10.5px;color:#0c0c0c;-webkit-text-stroke:.15px #0c0c0c;letter-spacing:0.124px">British Columbia</span></div>
<div class="c v" style="left:803.40px;width:166.10px;"><span class="a" style="left:1.6px;top:0.55px;line-height:14px;font-size:10.5px;color:#0c0c0c;-webkit-text-stroke:.15px #0c0c0c;letter-spacing:-0.147px">Accessories</span></div>
<div class="c v" style="left:969.50px;width:17.00px;"><span class="a" style="left:1.6px;top:0.55px;line-height:14px;font-size:10.5px;color:#0c0c0c;-webkit-text-stroke:.15px #0c0c0c;letter-spacing:-0.089px">Bik</span></div>
</div>
<div class="rh" style="top:348px;height:16px"></div>
<div class="a" style="left:4.65px;top:350.02px;line-height:14px;font-size:10.5px;color:#ececec;letter-spacing:0.218px;">18</div>
<div class="row" style="top:348px;height:16px;background:#acb7c3">
<div class="c" style="left:-0.50px;width:63.25px;"></div>
<div class="c" style="left:62.75px;width:43.00px;"></div>
<div class="c" style="left:105.75px;width:81.75px;"></div>
<div class="c" style="left:187.50px;width:91.25px;"></div>
<div class="c" style="left:278.75px;width:109.65px;"></div>
<div class="c" style="left:388.40px;width:91.10px;"></div>
<div class="c" style="left:479.50px;width:118.70px;"><span class="a" style="left:2.6px;top:1.02px;line-height:14px;font-size:10.5px;color:#0c0c0c;-webkit-text-stroke:.15px #0c0c0c;letter-spacing:0.000px">M</span></div>
<div class="c" style="left:598.20px;width:107.40px;"><span class="a" style="left:2.6px;top:1.02px;line-height:14px;font-size:10.5px;color:#0c0c0c;-webkit-text-stroke:.15px #0c0c0c;letter-spacing:-0.270px">Canada</span></div>
<div class="c" style="left:705.60px;width:97.80px;"><span class="a" style="left:2.6px;top:1.02px;line-height:14px;font-size:10.5px;color:#0c0c0c;-webkit-text-stroke:.15px #0c0c0c;letter-spacing:0.124px">British Columbia</span></div>
<div class="c" style="left:803.40px;width:166.10px;"><span class="a" style="left:2.6px;top:1.02px;line-height:14px;font-size:10.5px;color:#0c0c0c;-webkit-text-stroke:.15px #0c0c0c;letter-spacing:-0.147px">Accessories</span></div>
<div class="c" style="left:969.50px;width:17.00px;"><span class="a" style="left:2.6px;top:1.02px;line-height:14px;font-size:10.5px;color:#0c0c0c;-webkit-text-stroke:.15px #0c0c0c;letter-spacing:-0.089px">Bik</span></div>
</div>
<div class="rh" style="top:364px;height:15px"></div>
<div class="a" style="left:4.65px;top:365.48px;line-height:14px;font-size:10.5px;color:#ececec;letter-spacing:0.218px;">19</div>
<div class="row" style="top:364px;height:15px;background:#c9c9c9">
<div class="c" style="left:-0.50px;width:63.25px;"><span class="a" style="left:16.20px;top:0.48px;line-height:14px;font-size:10.5px;color:#0c0c0c;-webkit-text-stroke:.15px #0c0c0c;letter-spacing:0.554px">9/2/2015</span></div>
<div class="c v" style="left:62.75px;width:43.00px;"><span class="a" style="left:1.6px;top:0.48px;line-height:14px;font-size:10.5px;color:#0c0c0c;-webkit-text-stroke:.15px #0c0c0c;letter-spacing:0.112px">Septemb</span></div>
<div class="c v" style="left:105.75px;width:81.75px;"><span class="a" style="left:54.66px;top:0.48px;line-height:14px;font-size:10.5px;color:#0c0c0c;-webkit-text-stroke:.15px #0c0c0c;letter-spacing:0.145px">2015</span></div>
<div class="c v" style="left:187.50px;width:91.25px;"><span class="a" style="left:58.21px;top:0.48px;line-height:14px;font-size:10.5px;color:#0c0c0c;-webkit-text-stroke:.15px #0c0c0c;letter-spacing:0.526px">11176</span></div>
<div class="c v" style="left:278.75px;width:109.65px;"><span class="a" style="left:95.35px;top:0.48px;line-height:14px;font-size:10.5px;color:#0c0c0c;-webkit-text-stroke:.15px #0c0c0c;letter-spacing:0.218px">29</span></div>
<div class="c v" style="left:388.40px;width:91.10px;"><span class="a" style="left:1.6px;top:0.48px;line-height:14px;font-size:10.5px;color:#0c0c0c;-webkit-text-stroke:.15px #0c0c0c;letter-spacing:0.114px">Young Adults (25-34)</span></div>
<div class="c v" style="left:479.50px;width:118.70px;"><span class="a" style="left:1.6px;top:0.48px;line-height:14px;font-size:10.5px;color:#0c0c0c;-webkit-text-stroke:.15px #0c0c0c;letter-spacing:0.000px">M</span></div>
<div class="c v" style="left:598.20px;width:107.40px;"><span class="a" style="left:1.6px;top:0.48px;line-height:14px;font-size:10.5px;color:#0c0c0c;-webkit-text-stroke:.15px #0c0c0c;letter-spacing:-0.270px">Canada</span></div>
<div class="c v" style="left:705.60px;width:97.80px;"><span class="a" style="left:1.6px;top:0.48px;line-height:14px;font-size:10.5px;color:#0c0c0c;-webkit-text-stroke:.15px #0c0c0c;letter-spacing:0.124px">British Columbia</span></div>
<div class="c v" style="left:803.40px;width:166.10px;"><span class="a" style="left:1.6px;top:0.48px;line-height:14px;font-size:10.5px;color:#0c0c0c;-webkit-text-stroke:.15px #0c0c0c;letter-spacing:-0.147px">Accessories</span></div>
<div class="c v" style="left:969.50px;width:17.00px;"><span class="a" style="left:1.6px;top:0.48px;line-height:14px;font-size:10.5px;color:#0c0c0c;-webkit-text-stroke:.15px #0c0c0c;letter-spacing:-0.089px">Bik</span></div>
</div>
<div class="rh" style="top:379px;height:15px"></div>
<div class="a" style="left:4.65px;top:380.95px;line-height:14px;font-size:10.5px;color:#ececec;letter-spacing:0.218px;">20</div>
<div class="row" style="top:379px;height:15px;background:#acb7c3">
<div class="c" style="left:-0.50px;width:63.25px;"><span class="a" style="left:10.25px;top:0.95px;line-height:14px;font-size:10.5px;color:#0c0c0c;-webkit-text-stroke:.15px #0c0c0c;letter-spacing:0.498px">1/22/2014</span></div>
<div class="c" style="left:62.75px;width:43.00px;"><span class="a" style="left:2.6px;top:0.95px;line-height:14px;font-size:10.5px;color:#0c0c0c;-webkit-text-stroke:.15px #0c0c0c;letter-spacing:-0.107px">January</span></div>
<div class="c" style="left:105.75px;width:81.75px;"><span class="a" style="left:55.66px;top:0.95px;line-height:14px;font-size:10.5px;color:#0c0c0c;-webkit-text-stroke:.15px #0c0c0c;letter-spacing:0.145px">2014</span></div>
<div class="c" style="left:187.50px;width:91.25px;"><span class="a" style="left:59.21px;top:0.95px;line-height:14px;font-size:10.5px;color:#0c0c0c;-webkit-text-stroke:.15px #0c0c0c;letter-spacing:0.526px">11176</span></div>
<div class="c" style="left:278.75px;width:109.65px;"><span class="a" style="left:96.35px;top:0.95px;line-height:14px;font-size:10.5px;color:#0c0c0c;-webkit-text-stroke:.15px #0c0c0c;letter-spacing:0.218px">29</span></div>
<div class="c" style="left:388.40px;width:91.10px;"><span class="a" style="left:2.6px;top:0.95px;line-height:14px;font-size:10.5px;color:#0c0c0c;-webkit-text-stroke:.15px #0c0c0c;letter-spacing:0.114px">Young Adults (25-34)</span></div>
<div class="c" style="left:479.50px;width:118.70px;"><span class="a" style="left:2.6px;top:0.95px;line-height:14px;font-size:10.5px;color:#0c0c0c;-webkit-text-stroke:.15px #0c0c0c;letter-spacing:0.000px">M</span></div>
<div class="c" style="left:598.20px;width:107.40px;"><span class="a" style="left:2.6px;top:0.95px;line-height:14px;font-size:10.5px;color:#0c0c0c;-webkit-text-stroke:.15px #0c0c0c;letter-spacing:-0.270px">Canada</span></div>
<div class="c" style="left:705.60px;width:97.80px;"><span class="a" style="left:2.6px;top:0.95px;line-height:14px;font-size:10.5px;color:#0c0c0c;-webkit-text-stroke:.15px #0c0c0c;letter-spacing:0.124px">British Columbia</span></div>
<div class="c" style="left:803.40px;width:166.10px;"><span class="a" style="left:2.6px;top:0.95px;line-height:14px;font-size:10.5px;color:#0c0c0c;-webkit-text-stroke:.15px #0c0c0c;letter-spacing:-0.147px">Accessories</span></div>
<div class="c" style="left:969.50px;width:17.00px;"><span class="a" style="left:2.6px;top:0.95px;line-height:14px;font-size:10.5px;color:#0c0c0c;-webkit-text-stroke:.15px #0c0c0c;letter-spacing:-0.089px">Bik</span></div>
</div>
<div class="rh" style="top:394px;height:16px"></div>
<div class="a" style="left:4.65px;top:396.42px;line-height:14px;font-size:10.5px;color:#ececec;letter-spacing:0.218px;">21</div>
<div class="row" style="top:394px;height:16px;background:#c9c9c9">
<div class="c" style="left:-0.50px;width:63.25px;"><span class="a" style="left:10.25px;top:1.42px;line-height:14px;font-size:10.5px;color:#0c0c0c;-webkit-text-stroke:.15px #0c0c0c;letter-spacing:0.498px">1/22/2016</span></div>
<div class="c v" style="left:62.75px;width:43.00px;"><span class="a" style="left:1.6px;top:1.42px;line-height:14px;font-size:10.5px;color:#0c0c0c;-webkit-text-stroke:.15px #0c0c0c;letter-spacing:-0.107px">January</span></div>
<div class="c v" style="left:105.75px;width:81.75px;"><span class="a" style="left:54.66px;top:1.42px;line-height:14px;font-size:10.5px;color:#0c0c0c;-webkit-text-stroke:.15px #0c0c0c;letter-spacing:0.145px">2016</span></div>
<div class="c v" style="left:187.50px;width:91.25px;"><span class="a" style="left:58.21px;top:1.42px;line-height:14px;font-size:10.5px;color:#0c0c0c;-webkit-text-stroke:.15px #0c0c0c;letter-spacing:0.526px">11176</span></div>
<div class="c v" style="left:278.75px;width:109.65px;"><span class="a" style="left:95.35px;top:1.42px;line-height:14px;font-size:10.5px;color:#0c0c0c;-webkit-text-stroke:.15px #0c0c0c;letter-spacing:0.218px">29</span></div>
<div class="c v" style="left:388.40px;width:91.10px;"><span class="a" style="left:1.6px;top:1.42px;line-height:14px;font-size:10.5px;color:#0c0c0c;-webkit-text-stroke:.15px #0c0c0c;letter-spacing:0.114px">Young Adults (25-34)</span></div>
<div class="c v" style="left:479.50px;width:118.70px;"><span class="a" style="left:1.6px;top:1.42px;line-height:14px;font-size:10.5px;color:#0c0c0c;-webkit-text-stroke:.15px #0c0c0c;letter-spacing:0.000px">M</span></div>
<div class="c v" style="left:598.20px;width:107.40px;"><span class="a" style="left:1.6px;top:1.42px;line-height:14px;font-size:10.5px;color:#0c0c0c;-webkit-text-stroke:.15px #0c0c0c;letter-spacing:-0.270px">Canada</span></div>
<div class="c v" style="left:705.60px;width:97.80px;"><span class="a" style="left:1.6px;top:1.42px;line-height:14px;font-size:10.5px;color:#0c0c0c;-webkit-text-stroke:.15px #0c0c0c;letter-spacing:0.124px">British Columbia</span></div>
<div class="c v" style="left:803.40px;width:166.10px;"><span class="a" style="left:1.6px;top:1.42px;line-height:14px;font-size:10.5px;color:#0c0c0c;-webkit-text-stroke:.15px #0c0c0c;letter-spacing:-0.147px">Accessories</span></div>
<div class="c v" style="left:969.50px;width:17.00px;"><span class="a" style="left:1.6px;top:1.42px;line-height:14px;font-size:10.5px;color:#0c0c0c;-webkit-text-stroke:.15px #0c0c0c;letter-spacing:-0.089px">Bik</span></div>
</div>
<div class="rh" style="top:410px;height:15px"></div>
<div class="a" style="left:4.65px;top:411.88px;line-height:14px;font-size:10.5px;color:#ececec;letter-spacing:0.218px;">22</div>
<div class="row" style="top:410px;height:15px;background:#acb7c3">
<div class="c" style="left:-0.50px;width:63.25px;"><span class="a" style="left:10.25px;top:0.88px;line-height:14px;font-size:10.5px;color:#0c0c0c;-webkit-text-stroke:.15px #0c0c0c;letter-spacing:0.498px">5/17/2014</span></div>
<div class="c" style="left:62.75px;width:43.00px;"><span class="a" style="left:2.6px;top:0.88px;line-height:14px;font-size:10.5px;color:#0c0c0c;-webkit-text-stroke:.15px #0c0c0c;letter-spacing:0.565px">May</span></div>
<div class="c" style="left:105.75px;width:81.75px;"><span class="a" style="left:55.66px;top:0.88px;line-height:14px;font-size:10.5px;color:#0c0c0c;-webkit-text-stroke:.15px #0c0c0c;letter-spacing:0.145px">2014</span></div>
<div class="c" style="left:187.50px;width:91.25px;"><span class="a" style="left:59.21px;top:0.88px;line-height:14px;font-size:10.5px;color:#0c0c0c;-webkit-text-stroke:.15px #0c0c0c;letter-spacing:0.526px">11176</span></div>
<div class="c" style="left:278.75px;width:109.65px;"><span class="a" style="left:96.35px;top:0.88px;line-height:14px;font-size:10.5px;color:#0c0c0c;-webkit-text-stroke:.15px #0c0c0c;letter-spacing:0.218px">29</span></div>
<div class="c" style="left:388.40px;width:91.10px;"><span class="a" style="left:2.6px;top:0.88px;line-height:14px;font-size:10.5px;color:#0c0c0c;-webkit-text-stroke:.15px #0c0c0c;letter-spacing:0.114px">Young Adults (25-34)</span></div>
<div class="c" style="left:479.50px;width:118.70px;"><span class="a" style="left:2.6px;top:0.88px;line-height:14px;font-size:10.5px;color:#0c0c0c;-webkit-text-stroke:.15px #0c0c0c;letter-spacing:0.000px">M</span></div>
<div class="c" style="left:598.20px;width:107.40px;"><span class="a" style="left:2.6px;top:0.88px;line-height:14px;font-size:10.5px;color:#0c0c0c;-webkit-text-stroke:.15px #0c0c0c;letter-spacing:-0.270px">Canada</span></div>
<div class="c" style="left:705.60px;width:97.80px;"><span class="a" style="left:2.6px;top:0.88px;line-height:14px;font-size:10.5px;color:#0c0c0c;-webkit-text-stroke:.15px #0c0c0c;letter-spacing:0.124px">British Columbia</span></div>
<div class="c" style="left:803.40px;width:166.10px;"><span class="a" style="left:2.6px;top:0.88px;line-height:14px;font-size:10.5px;color:#0c0c0c;-webkit-text-stroke:.15px #0c0c0c;letter-spacing:-0.147px">Accessories</span></div>
<div class="c" style="left:969.50px;width:17.00px;"><span class="a" style="left:2.6px;top:0.88px;line-height:14px;font-size:10.5px;color:#0c0c0c;-webkit-text-stroke:.15px #0c0c0c;letter-spacing:-0.089px">Bik</span></div>
</div>
<div class="rh" style="top:425px;height:16px"></div>
<div class="a" style="left:4.65px;top:427.35px;line-height:14px;font-size:10.5px;color:#ececec;letter-spacing:0.218px;">23</div>
<div class="row" style="top:425px;height:16px;background:#c9c9c9">
<div class="c" style="left:-0.50px;width:63.25px;"><span class="a" style="left:10.25px;top:1.35px;line-height:14px;font-size:10.5px;color:#0c0c0c;-webkit-text-stroke:.15px #0c0c0c;letter-spacing:0.498px">5/17/2016</span></div>
<div class="c v" style="left:62.75px;width:43.00px;"><span class="a" style="left:1.6px;top:1.35px;line-height:14px;font-size:10.5px;color:#0c0c0c;-webkit-text-stroke:.15px #0c0c0c;letter-spacing:0.565px">May</span></div>
<div class="c v" style="left:105.75px;width:81.75px;"><span class="a" style="left:54.66px;top:1.35px;line-height:14px;font-size:10.5px;color:#0c0c0c;-webkit-text-stroke:.15px #0c0c0c;letter-spacing:0.145px">2016</span></div>
<div class="c v" style="left:187.50px;width:91.25px;"><span class="a" style="left:58.21px;top:1.35px;line-height:14px;font-size:10.5px;color:#0c0c0c;-webkit-text-stroke:.15px #0c0c0c;letter-spacing:0.526px">11176</span></div>
<div class="c v" style="left:278.75px;width:109.65px;"><span class="a" style="left:95.35px;top:1.35px;line-height:14px;font-size:10.5px;color:#0c0c0c;-webkit-text-stroke:.15px #0c0c0c;letter-spacing:0.218px">29</span></div>
<div class="c v" style="left:388.40px;width:91.10px;"><span class="a" style="left:1.6px;top:1.35px;line-height:14px;font-size:10.5px;color:#0c0c0c;-webkit-text-stroke:.15px #0c0c0c;letter-spacing:0.114px">Young Adults (25-34)</span></div>
<div class="c v" style="left:479.50px;width:118.70px;"><span class="a" style="left:1.6px;top:1.35px;line-height:14px;font-size:10.5px;color:#0c0c0c;-webkit-text-stroke:.15px #0c0c0c;letter-spacing:0.000px">M</span></div>
<div class="c v" style="left:598.20px;width:107.40px;"><span class="a" style="left:1.6px;top:1.35px;line-height:14px;font-size:10.5px;color:#0c0c0c;-webkit-text-stroke:.15px #0c0c0c;letter-spacing:-0.270px">Canada</span></div>
<div class="c v" style="left:705.60px;width:97.80px;"><span class="a" style="left:1.6px;top:1.35px;line-height:14px;font-size:10.5px;color:#0c0c0c;-webkit-text-stroke:.15px #0c0c0c;letter-spacing:0.124px">British Columbia</span></div>
<div class="c v" style="left:803.40px;width:166.10px;"><span class="a" style="left:1.6px;top:1.35px;line-height:14px;font-size:10.5px;color:#0c0c0c;-webkit-text-stroke:.15px #0c0c0c;letter-spacing:-0.147px">Accessories</span></div>
<div class="c v" style="left:969.50px;width:17.00px;"><span class="a" style="left:1.6px;top:1.35px;line-height:14px;font-size:10.5px;color:#0c0c0c;-webkit-text-stroke:.15px #0c0c0c;letter-spacing:-0.089px">Bik</span></div>
</div>
<div class="rh" style="top:441px;height:15px"></div>
<div class="a" style="left:4.65px;top:442.82px;line-height:14px;font-size:10.5px;color:#ececec;letter-spacing:0.218px;">24</div>
<div class="row" style="top:441px;height:15px;background:#acb7c3">
<div class="c" style="left:-0.50px;width:63.25px;"><span class="a" style="left:10.25px;top:0.82px;line-height:14px;font-size:10.5px;color:#0c0c0c;-webkit-text-stroke:.15px #0c0c0c;letter-spacing:0.498px">3/27/2014</span></div>
<div class="c" style="left:62.75px;width:43.00px;"><span class="a" style="left:2.6px;top:0.82px;line-height:14px;font-size:10.5px;color:#0c0c0c;-webkit-text-stroke:.15px #0c0c0c;letter-spacing:0.424px">March</span></div>
<div class="c" style="left:105.75px;width:81.75px;"><span class="a" style="left:55.66px;top:0.82px;line-height:14px;font-size:10.5px;color:#0c0c0c;-webkit-text-stroke:.15px #0c0c0c;letter-spacing:0.145px">2014</span></div>
<div class="c" style="left:187.50px;width:91.25px;"><span class="a" style="left:59.21px;top:0.82px;line-height:14px;font-size:10.5px;color:#0c0c0c;-webkit-text-stroke:.15px #0c0c0c;letter-spacing:0.526px">11196</span></div>
<div class="c" style="left:278.75px;width:109.65px;"><span class="a" style="left:96.35px;top:0.82px;line-height:14px;font-size:10.5px;color:#0c0c0c;-webkit-text-stroke:.15px #0c0c0c;letter-spacing:0.218px">51</span></div>
<div class="c" style="left:388.40px;width:91.10px;"><span class="a" style="left:2.6px;top:0.82px;line-height:14px;font-size:10.5px;color:#0c0c0c;-webkit-text-stroke:.15px #0c0c0c;letter-spacing:0.116px">Adults (35-64)</span></div>
<div class="c" style="left:479.50px;width:118.70px;"><span class="a" style="left:2.6px;top:0.82px;line-height:14px;font-size:10.5px;color:#0c0c0c;-webkit-text-stroke:.15px #0c0c0c;letter-spacing:0.000px">M</span></div>
<div class="c" style="left:598.20px;width:107.40px;"><span class="a" style="left:2.6px;top:0.82px;line-height:14px;font-size:10.5px;color:#0c0c0c;-webkit-text-stroke:.15px #0c0c0c;letter-spacing:0.102px">United States</span></div>
<div class="c" style="left:705.60px;width:97.80px;"><span class="a" style="left:2.6px;top:0.82px;line-height:14px;font-size:10.5px;color:#0c0c0c;-webkit-text-stroke:.15px #0c0c0c;letter-spacing:0.110px">Oregon</span></div>
<div class="c" style="left:803.40px;width:166.10px;"><span class="a" style="left:2.6px;top:0.82px;line-height:14px;font-size:10.5px;color:#0c0c0c;-webkit-text-stroke:.15px #0c0c0c;letter-spacing:-0.147px">Accessories</span></div>
<div class="c" style="left:969.50px;width:17.00px;"><span class="a" style="left:2.6px;top:0.82px;line-height:14px;font-size:10.5px;color:#0c0c0c;-webkit-text-stroke:.15px #0c0c0c;letter-spacing:-0.089px">Bik</span></div>
</div>
<div class="rh" style="top:456px;height:16px"></div>
<div class="a" style="left:4.65px;top:458.28px;line-height:14px;font-size:10.5px;color:#ececec;letter-spacing:0.218px;">25</div>
<div class="row" style="top:456px;height:16px;background:#c9c9c9">
<div class="c" style="left:-0.50px;width:63.25px;"><span class="a" style="left:10.25px;top:1.28px;line-height:14px;font-size:10.5px;color:#0c0c0c;-webkit-text-stroke:.15px #0c0c0c;letter-spacing:0.498px">3/27/2016</span></div>
<div class="c v" style="left:62.75px;width:43.00px;"><span class="a" style="left:1.6px;top:1.28px;line-height:14px;font-size:10.5px;color:#0c0c0c;-webkit-text-stroke:.15px #0c0c0c;letter-spacing:0.424px">March</span></div>
<div class="c v" style="left:105.75px;width:81.75px;"><span class="a" style="left:54.66px;top:1.28px;line-height:14px;font-size:10.5px;color:#0c0c0c;-webkit-text-stroke:.15px #0c0c0c;letter-spacing:0.145px">2016</span></div>
<div class="c v" style="left:187.50px;width:91.25px;"><span class="a" style="left:58.21px;top:1.28px;line-height:14px;font-size:10.5px;color:#0c0c0c;-webkit-text-stroke:.15px #0c0c0c;letter-spacing:0.526px">11196</span></div>
<div class="c v" style="left:278.75px;width:109.65px;"><span class="a" style="left:95.35px;top:1.28px;line-height:14px;font-size:10.5px;color:#0c0c0c;-webkit-text-stroke:.15px #0c0c0c;letter-spacing:0.218px">51</span></div>
<div class="c v" style="left:388.40px;width:91.10px;"><span class="a" style="left:1.6px;top:1.28px;line-height:14px;font-size:10.5px;color:#0c0c0c;-webkit-text-stroke:.15px #0c0c0c;letter-spacing:0.116px">Adults (35-64)</span></div>
<div class="c v" style="left:479.50px;width:118.70px;"><span class="a" style="left:1.6px;top:1.28px;line-height:14px;font-size:10.5px;color:#0c0c0c;-webkit-text-stroke:.15px #0c0c0c;letter-spacing:0.000px">M</span></div>
<div class="c v" style="left:598.20px;width:107.40px;"><span class="a" style="left:1.6px;top:1.28px;line-height:14px;font-size:10.5px;color:#0c0c0c;-webkit-text-stroke:.15px #0c0c0c;letter-spacing:0.102px">United States</span></div>
<div class="c v" style="left:705.60px;width:97.80px;"><span class="a" style="left:1.6px;top:1.28px;line-height:14px;font-size:10.5px;color:#0c0c0c;-webkit-text-stroke:.15px #0c0c0c;letter-spacing:0.110px">Oregon</span></div>
<div class="c v" style="left:803.40px;width:166.10px;"><span class="a" style="left:1.6px;top:1.28px;line-height:14px;font-size:10.5px;color:#0c0c0c;-webkit-text-stroke:.15px #0c0c0c;letter-spacing:-0.147px">Accessories</span></div>
<div class="c v" style="left:969.50px;width:17.00px;"><span class="a" style="left:1.6px;top:1.28px;line-height:14px;font-size:10.5px;color:#0c0c0c;-webkit-text-stroke:.15px #0c0c0c;letter-spacing:-0.089px">Bik</span></div>
</div>
<div class="rh" style="top:472px;height:15px"></div>
<div class="a" style="left:4.65px;top:473.75px;line-height:14px;font-size:10.5px;color:#ececec;letter-spacing:0.218px;">26</div>
<div class="row" style="top:472px;height:15px;background:#acb7c3">
<div class="c" style="left:-0.50px;width:63.25px;"><span class="a" style="left:10.25px;top:0.75px;line-height:14px;font-size:10.5px;color:#0c0c0c;-webkit-text-stroke:.15px #0c0c0c;letter-spacing:0.498px">8/25/2013</span></div>
<div class="c" style="left:62.75px;width:43.00px;"><span class="a" style="left:2.6px;top:0.75px;line-height:14px;font-size:10.5px;color:#0c0c0c;-webkit-text-stroke:.15px #0c0c0c;letter-spacing:0.093px">August</span></div>
<div class="c" style="left:105.75px;width:81.75px;"><span class="a" style="left:55.66px;top:0.75px;line-height:14px;font-size:10.5px;color:#0c0c0c;-webkit-text-stroke:.15px #0c0c0c;letter-spacing:0.145px">2013</span></div>
<div class="c" style="left:187.50px;width:91.25px;"><span class="a" style="left:59.21px;top:0.75px;line-height:14px;font-size:10.5px;color:#0c0c0c;-webkit-text-stroke:.15px #0c0c0c;letter-spacing:0.331px">11203</span></div>
<div class="c" style="left:278.75px;width:109.65px;"><span class="a" style="left:96.35px;top:0.75px;line-height:14px;font-size:10.5px;color:#0c0c0c;-webkit-text-stroke:.15px #0c0c0c;letter-spacing:0.218px">49</span></div>
<div class="c" style="left:388.40px;width:91.10px;"><span class="a" style="left:2.6px;top:0.75px;line-height:14px;font-size:10.5px;color:#0c0c0c;-webkit-text-stroke:.15px #0c0c0c;letter-spacing:0.116px">Adults (35-64)</span></div>
<div class="c" style="left:479.50px;width:118.70px;"><span class="a" style="left:2.6px;top:0.75px;line-height:14px;font-size:10.5px;color:#0c0c0c;-webkit-text-stroke:.15px #0c0c0c;letter-spacing:0.000px">M</span></div>
<div class="c" style="left:598.20px;width:107.40px;"><span class="a" style="left:2.6px;top:0.75px;line-height:14px;font-size:10.5px;color:#0c0c0c;-webkit-text-stroke:.15px #0c0c0c;letter-spacing:-0.270px">Canada</span></div>
<div class="c" style="left:705.60px;width:97.80px;"><span class="a" style="left:2.6px;top:0.75px;line-height:14px;font-size:10.5px;color:#0c0c0c;-webkit-text-stroke:.15px #0c0c0c;letter-spacing:0.124px">British Columbia</span></div>
<div class="c" style="left:803.40px;width:166.10px;"><span class="a" style="left:2.6px;top:0.75px;line-height:14px;font-size:10.5px;color:#0c0c0c;-webkit-text-stroke:.15px #0c0c0c;letter-spacing:-0.147px">Accessories</span></div>
<div class="c" style="left:969.50px;width:17.00px;"><span class="a" style="left:2.6px;top:0.75px;line-height:14px;font-size:10.5px;color:#0c0c0c;-webkit-text-stroke:.15px #0c0c0c;letter-spacing:-0.089px">Bik</span></div>
</div>
<div class="rh" style="top:487px;height:16px"></div>
<div class="a" style="left:4.65px;top:489.22px;line-height:14px;font-size:10.5px;color:#ececec;letter-spacing:0.218px;">27</div>
<div class="row" style="top:487px;height:16px;background:#c9c9c9">
<div class="c" style="left:-0.50px;width:63.25px;"><span class="a" style="left:10.25px;top:1.22px;line-height:14px;font-size:10.5px;color:#0c0c0c;-webkit-text-stroke:.15px #0c0c0c;letter-spacing:0.498px">8/25/2015</span></div>
<div class="c v" style="left:62.75px;width:43.00px;"><span class="a" style="left:1.6px;top:1.22px;line-height:14px;font-size:10.5px;color:#0c0c0c;-webkit-text-stroke:.15px #0c0c0c;letter-spacing:0.093px">August</span></div>
<div class="c v" style="left:105.75px;width:81.75px;"><span class="a" style="left:54.66px;top:1.22px;line-height:14px;font-size:10.5px;color:#0c0c0c;-webkit-text-stroke:.15px #0c0c0c;letter-spacing:0.145px">2015</span></div>
<div class="c v" style="left:187.50px;width:91.25px;"><span class="a" style="left:58.21px;top:1.22px;line-height:14px;font-size:10.5px;color:#0c0c0c;-webkit-text-stroke:.15px #0c0c0c;letter-spacing:0.331px">11203</span></div>
<div class="c v" style="left:278.75px;width:109.65px;"><span class="a" style="left:95.35px;top:1.22px;line-height:14px;font-size:10.5px;color:#0c0c0c;-webkit-text-stroke:.15px #0c0c0c;letter-spacing:0.218px">49</span></div>
<div class="c v" style="left:388.40px;width:91.10px;"><span class="a" style="left:1.6px;top:1.22px;line-height:14px;font-size:10.5px;color:#0c0c0c;-webkit-text-stroke:.15px #0c0c0c;letter-spacing:0.116px">Adults (35-64)</span></div>
<div class="c v" style="left:479.50px;width:118.70px;"><span class="a" style="left:1.6px;top:1.22px;line-height:14px;font-size:10.5px;color:#0c0c0c;-webkit-text-stroke:.15px #0c0c0c;letter-spacing:0.000px">M</span></div>
<div class="c v" style="left:598.20px;width:107.40px;"><span class="a" style="left:1.6px;top:1.22px;line-height:14px;font-size:10.5px;color:#0c0c0c;-webkit-text-stroke:.15px #0c0c0c;letter-spacing:-0.270px">Canada</span></div>
<div class="c v" style="left:705.60px;width:97.80px;"><span class="a" style="left:1.6px;top:1.22px;line-height:14px;font-size:10.5px;color:#0c0c0c;-webkit-text-stroke:.15px #0c0c0c;letter-spacing:0.124px">British Columbia</span></div>
<div class="c v" style="left:803.40px;width:166.10px;"><span class="a" style="left:1.6px;top:1.22px;line-height:14px;font-size:10.5px;color:#0c0c0c;-webkit-text-stroke:.15px #0c0c0c;letter-spacing:-0.147px">Accessories</span></div>
<div class="c v" style="left:969.50px;width:17.00px;"><span class="a" style="left:1.6px;top:1.22px;line-height:14px;font-size:10.5px;color:#0c0c0c;-webkit-text-stroke:.15px #0c0c0c;letter-spacing:-0.089px">Bik</span></div>
</div>
<div class="rh" style="top:503px;height:15px"></div>
<div class="a" style="left:4.65px;top:504.68px;line-height:14px;font-size:10.5px;color:#ececec;letter-spacing:0.218px;">28</div>
<div class="row" style="top:503px;height:15px;background:#acb7c3">
<div class="c" style="left:-0.50px;width:63.25px;"><span class="a" style="left:4.30px;top:0.68px;line-height:14px;font-size:10.5px;color:#0c0c0c;-webkit-text-stroke:.15px #0c0c0c;letter-spacing:0.455px">12/26/2013</span></div>
<div class="c" style="left:62.75px;width:43.00px;"><span class="a" style="left:2.6px;top:0.68px;line-height:14px;font-size:10.5px;color:#0c0c0c;-webkit-text-stroke:.15px #0c0c0c;letter-spacing:0.060px">Decemb</span></div>
<div class="c" style="left:105.75px;width:81.75px;"><span class="a" style="left:55.66px;top:0.68px;line-height:14px;font-size:10.5px;color:#0c0c0c;-webkit-text-stroke:.15px #0c0c0c;letter-spacing:0.145px">2013</span></div>
<div class="c" style="left:187.50px;width:91.25px;"><span class="a" style="left:59.21px;top:0.68px;line-height:14px;font-size:10.5px;color:#0c0c0c;-webkit-text-stroke:.15px #0c0c0c;letter-spacing:0.331px">11203</span></div>
<div class="c" style="left:278.75px;width:109.65px;"><span class="a" style="left:96.35px;top:0.68px;line-height:14px;font-size:10.5px;color:#0c0c0c;-webkit-text-stroke:.15px #0c0c0c;letter-spacing:0.218px">49</span></div>
<div class="c" style="left:388.40px;width:91.10px;"><span class="a" style="left:2.6px;top:0.68px;line-height:14px;font-size:10.5px;color:#0c0c0c;-webkit-text-stroke:.15px #0c0c0c;letter-spacing:0.116px">Adults (35-64)</span></div>
<div class="c" style="left:479.50px;width:118.70px;"><span class="a" style="left:2.6px;top:0.68px;line-height:14px;font-size:10.5px;color:#0c0c0c;-webkit-text-stroke:.15px #0c0c0c;letter-spacing:0.000px">M</span></div>
<div class="c" style="left:598.20px;width:107.40px;"><span class="a" style="left:2.6px;top:0.68px;line-height:14px;font-size:10.5px;color:#0c0c0c;-webkit-text-stroke:.15px #0c0c0c;letter-spacing:-0.270px">Canada</span></div>
<div class="c" style="left:705.60px;width:97.80px;"><span class="a" style="left:2.6px;top:0.68px;line-height:14px;font-size:10.5px;color:#0c0c0c;-webkit-text-stroke:.15px #0c0c0c;letter-spacing:0.124px">British Columbia</span></div>
<div class="c" style="left:803.40px;width:166.10px;"><span class="a" style="left:2.6px;top:0.68px;line-height:14px;font-size:10.5px;color:#0c0c0c;-webkit-text-stroke:.15px #0c0c0c;letter-spacing:-0.147px">Accessories</span></div>
<div class="c" style="left:969.50px;width:17.00px;"><span class="a" style="left:2.6px;top:0.68px;line-height:14px;font-size:10.5px;color:#0c0c0c;-webkit-text-stroke:.15px #0c0c0c;letter-spacing:-0.089px">Bik</span></div>
</div>
<div class="rh" style="top:518px;height:16px"></div>
<div class="a" style="left:4.65px;top:520.15px;line-height:14px;font-size:10.5px;color:#ececec;letter-spacing:0.218px;">29</div>
<div class="row" style="top:518px;height:16px;background:#c9c9c9">
<div class="c" style="left:-0.50px;width:63.25px;"><span class="a" style="left:4.30px;top:1.15px;line-height:14px;font-size:10.5px;color:#0c0c0c;-webkit-text-stroke:.15px #0c0c0c;letter-spacing:0.455px">12/26/2015</span></div>
<div class="c v" style="left:62.75px;width:43.00px;"><span class="a" style="left:1.6px;top:1.15px;line-height:14px;font-size:10.5px;color:#0c0c0c;-webkit-text-stroke:.15px #0c0c0c;letter-spacing:0.060px">Decemb</span></div>
<div class="c v" style="left:105.75px;width:81.75px;"><span class="a" style="left:54.66px;top:1.15px;line-height:14px;font-size:10.5px;color:#0c0c0c;-webkit-text-stroke:.15px #0c0c0c;letter-spacing:0.145px">2015</span></div>
<div class="c v" style="left:187.50px;width:91.25px;"><span class="a" style="left:58.21px;top:1.15px;line-height:14px;font-size:10.5px;color:#0c0c0c;-webkit-text-stroke:.15px #0c0c0c;letter-spacing:0.331px">11203</span></div>
<div class="c v" style="left:278.75px;width:109.65px;"><span class="a" style="left:95.35px;top:1.15px;line-height:14px;font-size:10.5px;color:#0c0c0c;-webkit-text-stroke:.15px #0c0c0c;letter-spacing:0.218px">49</span></div>
<div class="c v" style="left:388.40px;width:91.10px;"><span class="a" style="left:1.6px;top:1.15px;line-height:14px;font-size:10.5px;color:#0c0c0c;-webkit-text-stroke:.15px #0c0c0c;letter-spacing:0.116px">Adults (35-64)</span></div>
<div class="c v" style="left:479.50px;width:118.70px;"><span class="a" style="left:1.6px;top:1.15px;line-height:14px;font-size:10.5px;color:#0c0c0c;-webkit-text-stroke:.15px #0c0c0c;letter-spacing:0.000px">M</span></div>
<div class="c v" style="left:598.20px;width:107.40px;"><span class="a" style="left:1.6px;top:1.15px;line-height:14px;font-size:10.5px;color:#0c0c0c;-webkit-text-stroke:.15px #0c0c0c;letter-spacing:-0.270px">Canada</span></div>
<div class="c v" style="left:705.60px;width:97.80px;"><span class="a" style="left:1.6px;top:1.15px;line-height:14px;font-size:10.5px;color:#0c0c0c;-webkit-text-stroke:.15px #0c0c0c;letter-spacing:0.124px">British Columbia</span></div>
<div class="c v" style="left:803.40px;width:166.10px;"><span class="a" style="left:1.6px;top:1.15px;line-height:14px;font-size:10.5px;color:#0c0c0c;-webkit-text-stroke:.15px #0c0c0c;letter-spacing:-0.147px">Accessories</span></div>
<div class="c v" style="left:969.50px;width:17.00px;"><span class="a" style="left:1.6px;top:1.15px;line-height:14px;font-size:10.5px;color:#0c0c0c;-webkit-text-stroke:.15px #0c0c0c;letter-spacing:-0.089px">Bik</span></div>
</div>
<div class="rh" style="top:534px;height:15px"></div>
<div class="a" style="left:4.65px;top:535.62px;line-height:14px;font-size:10.5px;color:#ececec;letter-spacing:0.218px;">30</div>
<div class="row" style="top:534px;height:15px;background:#acb7c3">
<div class="c" style="left:-0.50px;width:63.25px;"><span class="a" style="left:16.20px;top:0.62px;line-height:14px;font-size:10.5px;color:#0c0c0c;-webkit-text-stroke:.15px #0c0c0c;letter-spacing:0.554px">1/2/2014</span></div>
<div class="c" style="left:62.75px;width:43.00px;"><span class="a" style="left:2.6px;top:0.62px;line-height:14px;font-size:10.5px;color:#0c0c0c;-webkit-text-stroke:.15px #0c0c0c;letter-spacing:-0.107px">January</span></div>
<div class="c" style="left:105.75px;width:81.75px;"><span class="a" style="left:55.66px;top:0.62px;line-height:14px;font-size:10.5px;color:#0c0c0c;-webkit-text-stroke:.15px #0c0c0c;letter-spacing:0.145px">2014</span></div>
<div class="c" style="left:187.50px;width:91.25px;"><span class="a" style="left:59.21px;top:0.62px;line-height:14px;font-size:10.5px;color:#0c0c0c;-webkit-text-stroke:.15px #0c0c0c;letter-spacing:0.526px">11211</span></div>
<div class="c" style="left:278.75px;width:109.65px;"><span class="a" style="left:96.35px;top:0.62px;line-height:14px;font-size:10.5px;color:#0c0c0c;-webkit-text-stroke:.15px #0c0c0c;letter-spacing:0.218px">49</span></div>
<div class="c" style="left:388.40px;width:91.10px;"><span class="a" style="left:2.6px;top:0.62px;line-height:14px;font-size:10.5px;color:#0c0c0c;-webkit-text-stroke:.15px #0c0c0c;letter-spacing:0.116px">Adults (35-64)</span></div>
<div class="c" style="left:479.50px;width:118.70px;"><span class="a" style="left:2.6px;top:0.62px;line-height:14px;font-size:10.5px;color:#0c0c0c;-webkit-text-stroke:.15px #0c0c0c;letter-spacing:0.000px">F</span></div>
<div class="c" style="left:598.20px;width:107.40px;"><span class="a" style="left:2.6px;top:0.62px;line-height:14px;font-size:10.5px;color:#0c0c0c;-webkit-text-stroke:.15px #0c0c0c;letter-spacing:-0.270px">Canada</span></div>
<div class="c" style="left:705.60px;width:97.80px;"><span class="a" style="left:2.6px;top:0.62px;line-height:14px;font-size:10.5px;color:#0c0c0c;-webkit-text-stroke:.15px #0c0c0c;letter-spacing:0.124px">British Columbia</span></div>
<div class="c" style="left:803.40px;width:166.10px;"><span class="a" style="left:2.6px;top:0.62px;line-height:14px;font-size:10.5px;color:#0c0c0c;-webkit-text-stroke:.15px #0c0c0c;letter-spacing:-0.147px">Accessories</span></div>
<div class="c" style="left:969.50px;width:17.00px;"><span class="a" style="left:2.6px;top:0.62px;line-height:14px;font-size:10.5px;color:#0c0c0c;-webkit-text-stroke:.15px #0c0c0c;letter-spacing:-0.089px">Bik</span></div>
</div>
<div class="a" style="left:20.500px;top:100px;width:987px;height:1px;background:#2b7148"></div>
<div class="a" style="left:20.300px;top:100px;width:1.200px;height:440px;background:#2b7148"></div>
<div class="a" style="left:1007.500px;top:86px;width:16.500px;height:454px;background:#262626"></div>
<div class="a" style="left:1008.500px;top:86.500px;width:15.500px;height:453.500px;background:#3a3a3a"></div>
<div class="a" style="left:1010px;top:87px;width:12px;height:12px;background:#5a5a5a"></div>
<svg class="a" style="left:1010px;top:87px" width="12" height="12" viewBox="0 0 12 12"><path d="M3 7.500l3-3 3 3z" fill="#a0a0a0"/></svg>
<div class="a" style="left:1010px;top:100px;width:12px;height:13px;background:#5e5e5e"></div>
<div class="a" style="left:1009.500px;top:528px;width:12.500px;height:12px;background:#5a5a5a"></div>
<svg class="a" style="left:1010px;top:528px" width="12" height="12" viewBox="0 0 12 12"><path d="M3 4.500l3 3 3-3z" fill="#a0a0a0"/></svg>
<div class="a" style="left:0;top:540px;width:1024px;height:18px;background:#262626"></div>
<svg class="a" style="left:10px;top:543px" width="34" height="12" viewBox="0 0 34 12"><path d="M9.500 2.800v5.800l-4-2.900z" fill="#9a9a9a"/><path d="M23.300 2.800v5.800l4-2.900z" fill="#9a9a9a"/></svg>
<div class="a" style="left:63.300px;top:540px;width:36.700px;height:15.800px;background:#fff;border-bottom:1.500px solid #2f7d4f"></div>
<div class="a" style="left:70.00px;top:540.80px;line-height:14px;font-size:10.6px;color:#2b7148;letter-spacing:0.008px;font-weight:bold;">Data</div>
<div class="a" style="left:107.50px;top:540.80px;line-height:14px;font-size:10.6px;color:#e6e6e6;letter-spacing:-0.079px;">Pivot</div>
<div class="a" style="left:147.00px;top:540.80px;line-height:14px;font-size:10.6px;color:#e6e6e6;letter-spacing:-0.170px;">Dashboard</div>
<div class="a" style="left:216.50px;top:540.80px;line-height:14px;font-size:10.6px;color:#e6e6e6;letter-spacing:0.141px;">Pivot Table Addition</div>
<div class="a" style="left:138.5px;top:542px;width:1px;height:13px;background:#5a5a5a"></div>
<div class="a" style="left:206.3px;top:542px;width:1px;height:13px;background:#5a5a5a"></div>
<div class="a" style="left:322.3px;top:542px;width:1px;height:13px;background:#5a5a5a"></div>
<svg class="a" style="left:342.500px;top:541.700px" width="14" height="14" viewBox="0 0 14 14" fill="none" stroke="#e0e0e0" stroke-width="1"><circle cx="7" cy="7" r="5.400"/><path d="M4.200 7h5.600M7 4.200v5.600"/></svg>
<div class="a" style="left:611.800px;top:544.400px;width:1.600px;height:1.600px;background:#ddd;box-shadow:0 3px 0 #ddd,0 6px 0 #ddd"></div>
<div class="a" style="left:623px;top:542px;width:385px;height:13.500px;background:#3c3c3c"></div>
<div class="a" style="left:623px;top:542px;width:13px;height:13.500px;background:#565656"></div>
<svg class="a" style="left:623px;top:542px" width="13" height="14" viewBox="0 0 13 14"><path d="M8 3.700v6l-3.300-3z" fill="#a8a8a8"/></svg>
<div class="a" style="left:637px;top:542px;width:225.500px;height:13.500px;background:#5c5c5c"></div>
<div class="a" style="left:995.500px;top:542px;width:12.500px;height:13.500px;background:#565656"></div>
<svg class="a" style="left:995px;top:542px" width="13" height="14" viewBox="0 0 13 14"><path d="M5.200 3.700v6l3.300-3z" fill="#a8a8a8"/></svg>
<div class="a" style="left:0;top:557.500px;width:1024px;height:18.500px;background:#1f1f1f"></div>
<div class="a" style="left:0;top:574.500px;width:1024px;height:1.500px;background:#0a0a0a"></div>
<div class="a" style="left:5.50px;top:559.60px;line-height:14px;font-size:8.1px;color:#d8d8d8;letter-spacing:-0.229px;">Ready</div>
<div class="a" style="left:787px;top:558.300px;width:32px;height:16.500px;background:#494949"></div>
<svg class="a" style="left:787px;top:558px" width="237" height="17" viewBox="0 0 237 17" fill="none" stroke="#e0e0e0" stroke-width="1">
<rect x="10.500" y="4" width="10" height="9"/><path d="M10.500 7h10M10.500 10h10M14 4v9M17.500 4v9" stroke-width=".9"/>
<rect x="42.500" y="4" width="10" height="9" stroke="#bdbdbd"/><rect x="45" y="6" width="5" height="5" stroke="#bdbdbd" stroke-width=".9"/>
<rect x="74.500" y="4" width="10" height="9" stroke="#bdbdbd"/><rect x="75" y="4.500" width="4.200" height="5.500" fill="#eee" stroke="none"/><rect x="80" y="4.500" width="4" height="3.500" fill="#eee" stroke="none"/>
<path d="M100.500 8.500h5" stroke="#9a9a9a"/><path d="M110.500 8.500h79" stroke="#e8e8e8" stroke-width="1.200"/><rect x="148" y="3.500" width="4" height="10" fill="#f0f0f0" stroke="none"/>
<path d="M193.800 8.500h6M196.800 5.500v6" stroke="#9a9a9a"/>
</svg>
<div class="a" style="left:997.50px;top:559.60px;line-height:14px;font-size:8.3px;color:#e0e0e0;letter-spacing:-0.243px;">100%</div>
<div class="dlg">
<div class="a" style="left:0;top:0;width:468px;height:24px;background:#fff"></div>
<div class="a" style="left:5.70px;top:5.90px;line-height:14px;font-size:9.5px;color:#1e1e1e;letter-spacing:-0.041px;">Sort</div>
<div class="a" style="left:410.10px;top:4.80px;line-height:14px;font-size:11px;color:#333;letter-spacing:0.000px;">?</div>
<svg class="a" style="left:444.500px;top:7px" width="11" height="11" viewBox="0 0 11 11"><path d="M1 1l8.800 8.800M9.800 1l-8.800 8.800" stroke="#3c3c3c" stroke-width=".9" fill="none"/></svg>
<div class="btn" style="left:5.75px;top:30.30px;width:64.05px;height:19.10px;"><svg class="a" style="left:5px;top:3px" width="14" height="13" viewBox="0 0 14 13"><path d="M2.500 0.500v4M0.500 2.500h4" stroke="#2f8f5a" stroke-width="1.100"/><text x="3.600" y="7" font-family="Liberation Sans,sans-serif" font-size="6.400" fill="#3a6fb8" font-weight="bold">A</text><text x="3.900" y="12.600" font-family="Liberation Sans,sans-serif" font-size="6" fill="#7d8ea8" font-weight="bold">Z</text><path d="M10.800 2.500v9.500M8.800 10l2 2 2-2" stroke="#3a3a3a" fill="none" stroke-width="1"/></svg></div>
<div class="a" style="left:26.80px;top:32.90px;line-height:14px;font-size:8.3px;color:#1e1e1e;letter-spacing:-0.152px;"><u>A</u>dd Level</div>
<div class="btn" style="left:72.90px;top:30.30px;width:72.40px;height:19.10px;"><svg class="a" style="left:5.800px;top:3px" width="13" height="11" viewBox="0 0 13 11"><path d="M1.300 0.800l10 9.200M11.300 0.800l-10 9.200" stroke="#1c1c1c" stroke-width="1.600" fill="none"/></svg></div>
<div class="a" style="left:94.30px;top:32.90px;line-height:14px;font-size:8.3px;color:#1e1e1e;letter-spacing:-0.167px;"><u>D</u>elete Level</div>
<div class="btn" style="left:148.50px;top:30.30px;width:68.75px;height:19.10px;"><svg class="a" style="left:6.800px;top:3.300px" width="13" height="13" viewBox="0 0 13 13" fill="#fdfdfd" stroke="#6e6e6e" stroke-width=".8"><path d="M0.500 0.500h4l2 2v5.500h-6z"/><path d="M5.200 4.300h4l2 2v5.700h-6z"/><path d="M6.400 8h3.600M6.400 9.800h3.600M1.700 2.600h2.400M1.700 4.400h2.400M1.700 6.200h2.400" stroke-width=".6" stroke="#7a9ac8"/></svg></div>
<div class="a" style="left:169.75px;top:32.90px;line-height:14px;font-size:8.3px;color:#1e1e1e;letter-spacing:-0.153px;"><u>C</u>opy Level</div>
<div class="a" style="left:217.90px;top:30.30px;width:1px;height:19.10px;background:#9a9a9a"></div>
<div class="btn" style="left:220.80px;top:30.30px;width:19.30px;height:19.10px;"><svg class="a" style="left:5.200px;top:6px" width="8" height="6" viewBox="0 0 8 6"><path d="M0.300 5l3.700-4 3.700 4z" fill="#444"/></svg></div>
<div class="btn" style="left:242.70px;top:30.30px;width:19.10px;height:19.10px;"><svg class="a" style="left:5.200px;top:6.500px" width="8" height="6" viewBox="0 0 8 6"><path d="M0.300 1l3.700 4 3.700-4z" fill="#444"/></svg></div>
<div class="btn" style="left:264.40px;top:30.10px;width:47.80px;height:19.50px;border:1.500px solid #2478d4;"></div>
<div class="a" style="left:271.00px;top:32.90px;line-height:14px;font-size:8.3px;color:#1e1e1e;letter-spacing:-0.114px;"><u>O</u>ptions...</div>
<div class="a" style="left:369.90px;top:34.40px;width:11px;height:10.600px;background:#f7f7f7;border:1px solid #d6d6d6"></div>
<svg class="a" style="left:369.90px;top:34.40px" width="11" height="11" viewBox="0 0 11 11"><path d="M2.500 5.500l2 2.300 4-5" stroke="#c4c4c4" stroke-width="1" fill="none"/></svg>
<div class="a" style="left:386.30px;top:32.90px;line-height:14px;font-size:8.3px;color:#a0a0a0;letter-spacing:-0.095px;">My data has <u>h</u>eaders</div>
<div class="a" style="left:5.0px;top:52.5px;width:458.10px;height:134.0px;background:#fff;border:1px solid #a6a6a6"></div>
<div class="a" style="left:161.10px;top:54px;width:1px;height:16px;background:#e0e0e0"></div>
<div class="a" style="left:314.90px;top:54px;width:1px;height:16px;background:#e0e0e0"></div>
<div class="a" style="left:9.20px;top:55.70px;line-height:14px;font-size:8.3px;color:#1e1e1e;letter-spacing:0.160px;">Column</div>
<div class="a" style="left:164.10px;top:55.70px;line-height:14px;font-size:8.3px;color:#1e1e1e;letter-spacing:-0.050px;">Sort On</div>
<div class="a" style="left:318.00px;top:55.70px;line-height:14px;font-size:8.3px;color:#1e1e1e;letter-spacing:0.046px;">Order</div>
<div class="a" style="left:6.5px;top:70px;width:455.5px;height:17.500px;background:#e2e2ea"></div>
<div class="a" style="left:7.60px;top:70.00px;line-height:14px;font-size:8.3px;color:#1e1e1e;letter-spacing:-0.049px;">Sort by</div>
<div class="cb" style="left:44.80px;top:70.60px;width:107.80px"><i></i><svg class="a" style="right:3px;top:5px" width="8" height="6" viewBox="0 0 8 6"><path d="M1 1.200l3 3 3-3" stroke="#555" stroke-width=".9" fill="none"/></svg></div>
<div class="cb" style="left:161.90px;top:70.60px;width:145.00px"><i></i><svg class="a" style="right:3px;top:5px" width="8" height="6" viewBox="0 0 8 6"><path d="M1 1.200l3 3 3-3" stroke="#555" stroke-width=".9" fill="none"/></svg></div>
<div class="a" style="left:164.30px;top:71.70px;line-height:14px;font-size:8.3px;color:#1e1e1e;letter-spacing:-0.127px;">Cell Values</div>
<div class="cb" style="left:315.70px;top:70.60px;width:145.00px"><i></i><svg class="a" style="right:3px;top:5px" width="8" height="6" viewBox="0 0 8 6"><path d="M1 1.200l3 3 3-3" stroke="#555" stroke-width=".9" fill="none"/></svg></div>
<div class="a" style="left:318.10px;top:71.70px;line-height:14px;font-size:8.3px;color:#1e1e1e;letter-spacing:0.084px;">A to Z</div>
<div class="btn" style="left:335.60px;top:189.70px;width:59.80px;height:17.80px;"></div>
<div class="a" style="left:360.40px;top:191.90px;line-height:14px;font-size:7.5px;color:#1e1e1e;letter-spacing:-0.136px;">OK</div>
<div class="btn" style="left:403.60px;top:189.70px;width:59.65px;height:17.80px;"></div>
<div class="a" style="left:421.10px;top:191.90px;line-height:14px;font-size:8.1px;color:#1e1e1e;letter-spacing:-0.203px;">Cancel</div>
<svg class="a" style="left:457.500px;top:203px" width="10" height="10" viewBox="0 0 10 10" fill="#b4b4b4"><rect x="7" y="7" width="1.400" height="1.400"/><rect x="4.500" y="7" width="1.400" height="1.400"/><rect x="7" y="4.500" width="1.400" height="1.400"/><rect x="2" y="7" width="1.400" height="1.400"/><rect x="7" y="2" width="1.400" height="1.400"/><rect x="4.500" y="4.500" width="1.400" height="1.400"/></svg>
</div>
</body></html>
